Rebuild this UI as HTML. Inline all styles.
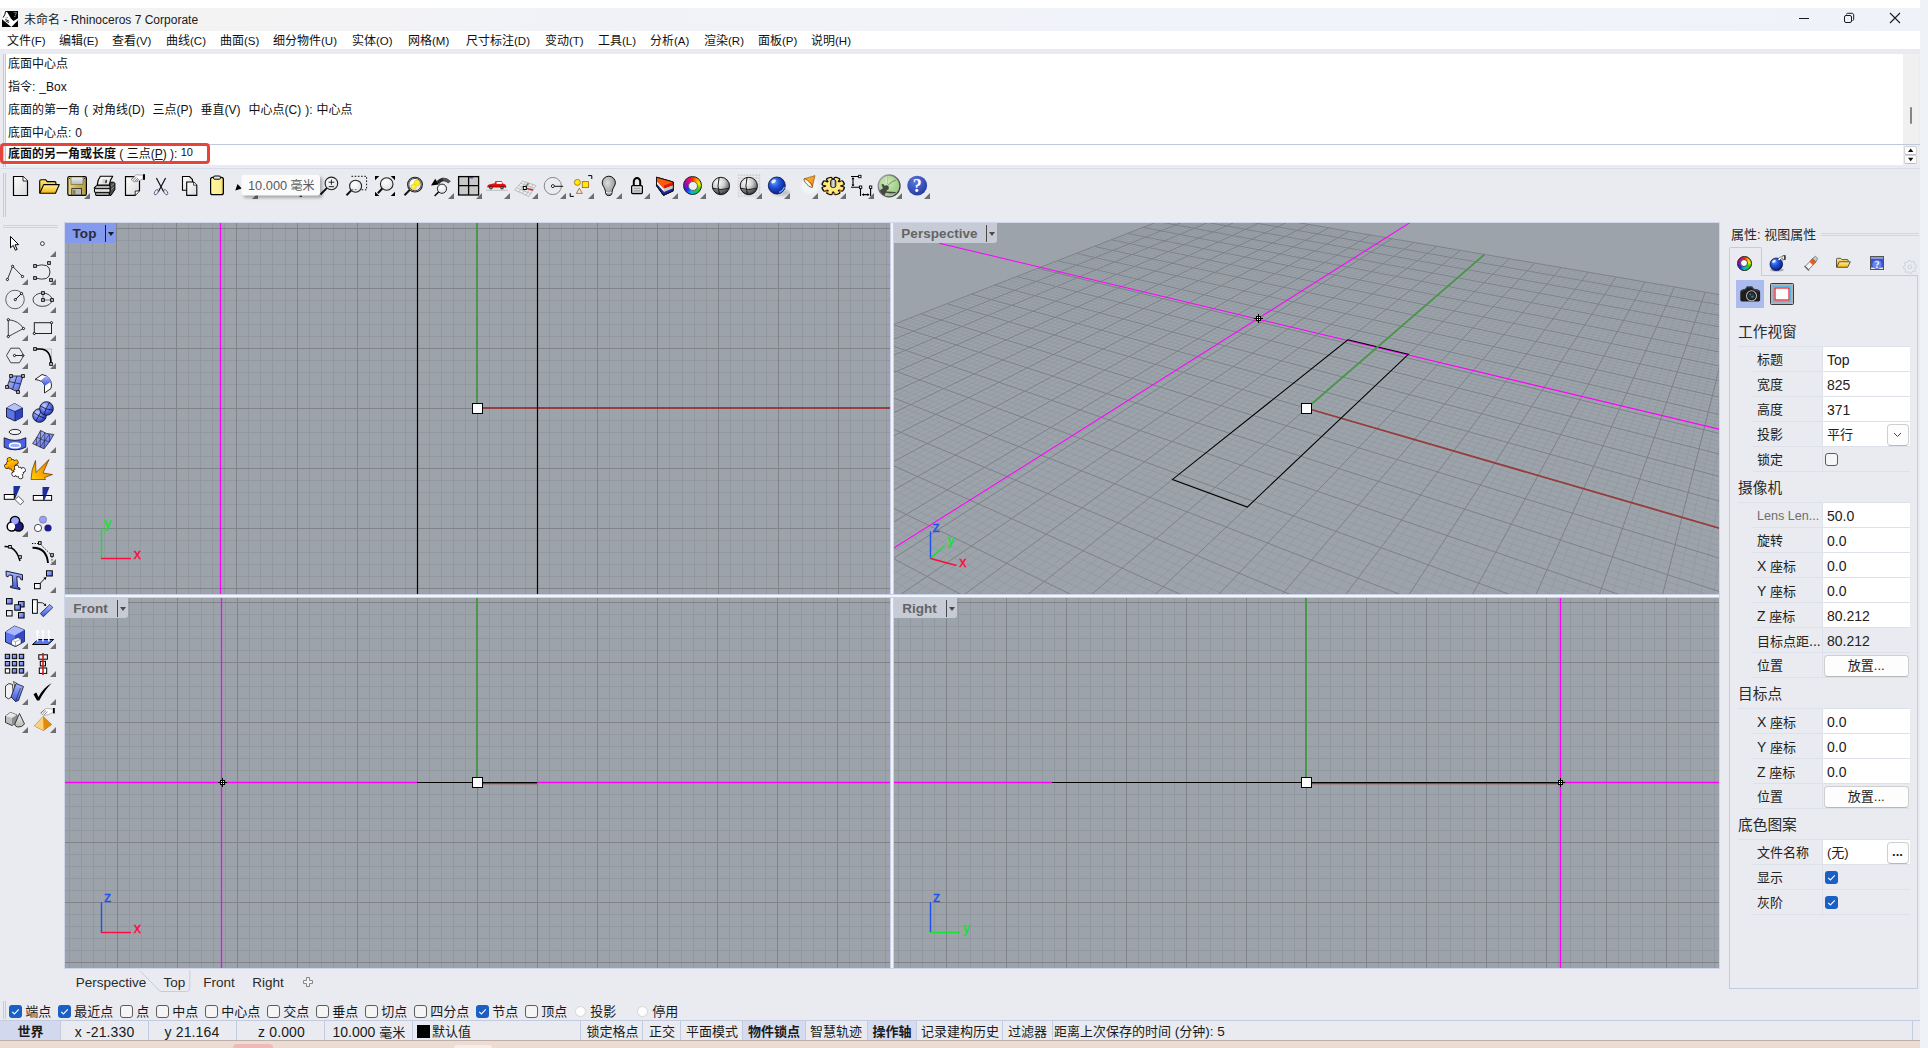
<!DOCTYPE html><html lang="zh"><head><meta charset="utf-8"><title>未命名 - Rhinoceros 7 Corporate</title><style>
*{box-sizing:border-box;margin:0;padding:0}
html,body{width:1928px;height:1048px;overflow:hidden;background:#fff}
body{position:relative;font-family:"Liberation Sans","Noto Sans CJK SC",sans-serif;font-size:12px;color:#111;line-height:1}
.a{position:absolute}
.t{position:absolute;white-space:nowrap;line-height:14px;height:14px}
svg{position:absolute;overflow:visible}
.vl{position:absolute;background:#c6cad6;height:20px;font-family:"Liberation Sans",sans-serif;font-weight:bold;font-size:13.5px;letter-spacing:.05px;color:#646464;line-height:21px;padding-right:12px;text-align:center;border-bottom-right-radius:3px}
</style></head><body>
<div class="a" style="left:0;top:8px;width:1920px;height:1032px;background:#e9ebf0"></div>
<div class="a" style="left:1920px;top:0;width:8px;height:1048px;background:#eff2f7"></div>
<div class="a" style="left:0;top:1040px;width:1920px;height:8px;background:#eedcd2"></div>
<div class="a" style="left:0;top:1040px;width:1920px;height:1px;background:#bcb0ac"></div>
<div class="a" style="left:233px;top:1044px;width:40px;height:4px;background:#efb9b8;border-radius:5px 5px 0 0"></div>
<div class="a" style="left:454px;top:1045px;width:38px;height:3px;background:#f8ece6;border-radius:4px 4px 0 0"></div>
<div class="a" style="left:0;top:8px;width:1920px;height:23px;background:linear-gradient(90deg,#f3f3f3 0,#f3f3f3 11%,#f1f2f8 30%,#f0f3f9 60%,#eff3f9 100%)"></div>
<div class="a" style="left:0;top:31px;width:1920px;height:18px;background:#fff"></div>
<svg style="left:2px;top:11px" width="16" height="16" viewBox="0 0 16 16"><rect x="0" y="0" width="16" height="16" fill="#fff"/><path d="M3.300 0H16V7.300L11.500 9.900L8.900 7.600L7.200 4.600L5.500 1.600Z" fill="#000"/><path d="M3.700 .2Q3 4 1.200 6.600" fill="none" stroke="#000" stroke-width="1"/><path d="M0 8.300L9.300 16H0Z" fill="#000"/><path d="M16 9.300V16H9.400Z" fill="#000"/><path d="M3.400 8.400L7.200 10.200M3.600 9.800L6.800 11.600" stroke="#000" stroke-width=".9"/><path d="M3.500 7.200L6 6.400" stroke="#555" stroke-width=".6"/><path d="M14.400 1.600L12.400 6.600" stroke="#fff" stroke-width=".7" stroke-dasharray="1.200 .600"/><path d="M11.600 1.400H14.400" stroke="#ddd" stroke-width=".5"/></svg>
<div class="t" style="left:24px;top:13px;color:#1a1a1a">未命名 - Rhinoceros 7 Corporate</div>
<svg style="left:1790px;top:8px" width="130" height="23" viewBox="1790 8 130 23" fill="none" stroke="#1a1a1a" stroke-width="1"><path d="M1799 18.5H1809"/><rect x="1844.5" y="15.5" width="7" height="7" rx="1.5"/><path d="M1846.5 14.500c0-.800.600-1.200 1.200-1.200h4.300c1 0 1.700.700 1.700 1.700v4.300c0 .700-.500 1.200-1.200 1.200"/><path d="M1890 13L1900 23M1900 13L1890 23" stroke-width="1.1"/></svg>
<div class="t" style="left:7px;top:34px;">文件<span style="font-size:11.5px">(F)</span></div>
<div class="t" style="left:59px;top:34px;">编辑<span style="font-size:11.5px">(E)</span></div>
<div class="t" style="left:112px;top:34px;">查看<span style="font-size:11.5px">(V)</span></div>
<div class="t" style="left:166px;top:34px;">曲线<span style="font-size:11.5px">(C)</span></div>
<div class="t" style="left:220px;top:34px;">曲面<span style="font-size:11.5px">(S)</span></div>
<div class="t" style="left:273px;top:34px;">细分物件<span style="font-size:11.5px">(U)</span></div>
<div class="t" style="left:352px;top:34px;">实体<span style="font-size:11.5px">(O)</span></div>
<div class="t" style="left:408px;top:34px;">网格<span style="font-size:11.5px">(M)</span></div>
<div class="t" style="left:466px;top:34px;">尺寸标注<span style="font-size:11.5px">(D)</span></div>
<div class="t" style="left:545px;top:34px;">变动<span style="font-size:11.5px">(T)</span></div>
<div class="t" style="left:598px;top:34px;">工具<span style="font-size:11.5px">(L)</span></div>
<div class="t" style="left:650px;top:34px;">分析<span style="font-size:11.5px">(A)</span></div>
<div class="t" style="left:704px;top:34px;">渲染<span style="font-size:11.5px">(R)</span></div>
<div class="t" style="left:758px;top:34px;">面板<span style="font-size:11.5px">(P)</span></div>
<div class="t" style="left:811px;top:34px;">说明<span style="font-size:11.5px">(H)</span></div>
<div class="a" style="left:6px;top:54px;width:1897px;height:90px;background:#fff"></div>
<div class="a" style="left:1903px;top:54px;width:16px;height:90px;background:#f0f0f0"></div>
<div class="a" style="left:1910px;top:107px;width:2px;height:17px;background:#858585;border-radius:1px"></div>
<div class="a" style="left:3px;top:54px;width:1px;height:113px;background:#c3cadf"></div>
<div class="a" style="left:5px;top:54px;width:1px;height:113px;background:#c3cadf"></div>
<div class="t" style="left:8px;top:57px;word-spacing:.65px">底面中心点</div>
<div class="t" style="left:8px;top:80px;word-spacing:.65px">指令: _Box</div>
<div class="t" style="left:8px;top:103px;word-spacing:.65px">底面的第一角 ( 对角线(D)&nbsp; 三点(P)&nbsp; 垂直(V)&nbsp; 中心点(C) ): 中心点</div>
<div class="t" style="left:8px;top:126px;word-spacing:.65px">底面中心点: 0</div>
<div class="a" style="left:0;top:144px;width:1920px;height:1px;background:#bfc8dc"></div>
<div class="a" style="left:6px;top:145px;width:1897px;height:20px;background:#fff"></div>
<div class="a" style="left:1px;top:168px;width:1919px;height:1px;background:#d6dbe8"></div>
<div class="t" style="left:8px;top:147px;"><b>底面的另一角或长度</b> ( 三点(<u>P</u>) ): <span style="font-size:11px;position:relative;top:-2px">10</span></div>
<div class="a" style="left:0;top:143px;width:210px;height:21px;border:3px solid #e8433a;border-radius:4px"></div>
<div class="a" style="left:1903px;top:145px;width:16px;height:20px;background:#eeeef0"></div>
<div class="a" style="left:1904.300px;top:146.200px;width:13px;height:8.400px;background:#fdfdfd;border:1px solid #d4d4d4;border-bottom-color:#bdbdbd;border-radius:2px"></div>
<div class="a" style="left:1904.300px;top:155.300px;width:13px;height:8.400px;background:#fdfdfd;border:1px solid #d4d4d4;border-bottom-color:#bdbdbd;border-radius:2px"></div>
<svg style="left:1904px;top:146px" width="14" height="18" viewBox="1904 146 14 18"><path d="M1908 152L1910.700 148.600L1913.400 152Z M1908 157.800L1910.700 161.200L1913.400 157.800Z" fill="#111"/></svg>
<div class="a" style="left:64px;top:222px;width:1656px;height:747px;background:#cfd6ea"></div>
<div class="a" style="left:890px;top:223px;width:4px;height:745px;background:#f2f4f9;border-left:1px solid #c9d1e8;border-right:1px solid #c9d1e8"></div>
<div class="a" style="left:65px;top:594px;width:1654px;height:4px;background:#f2f4f9;border-top:1px solid #c9d1e8;border-bottom:1px solid #c9d1e8"></div>
<div class="a" style="left:891px;top:595px;width:2px;height:2px;background:#f2f4f9"></div>
<svg style="left:65px;top:223px" width="825" height="371" viewBox="65 223 825 371"><defs><clipPath id="ct"><rect x="65" y="223" width="825" height="371"/></clipPath></defs><g clip-path="url(#ct)"><rect x="65" y="223" width="825" height="371" fill="#9da3aa"/><path d="M68.5 223V594M80.5 223V594M92.5 223V594M104.5 223V594M128.5 223V594M140.5 223V594M152.5 223V594M164.5 223V594M188.5 223V594M200.5 223V594M212.5 223V594M224.5 223V594M248.5 223V594M260.5 223V594M272.5 223V594M285.5 223V594M309.5 223V594M65 240.5H890M321.5 223V594M65 252.5H890M333.5 223V594M65 264.5H890M345.5 223V594M65 276.5H890M369.5 223V594M65 300.5H890M381.5 223V594M65 312.5H890M393.5 223V594M65 324.5H890M405.5 223V594M65 336.5H890M429.5 223V594M65 360.5H890M441.5 223V594M65 372.5H890M453.5 223V594M65 384.5H890M465.5 223V594M65 396.5H890M489.5 223V594M65 420.5H890M501.5 223V594M65 432.5H890M513.5 223V594M65 444.5H890M525.5 223V594M65 456.5H890M549.5 223V594M65 480.5H890M561.5 223V594M65 492.5H890M573.5 223V594M65 504.5H890M585.5 223V594M65 516.5H890M609.5 223V594M65 540.5H890M621.5 223V594M65 552.5H890M633.5 223V594M65 564.5H890M645.5 223V594M65 576.5H890M669.5 223V594M682.5 223V594M694.5 223V594M706.5 223V594M730.5 223V594M742.5 223V594M754.5 223V594M766.5 223V594M790.5 223V594M802.5 223V594M814.5 223V594M826.5 223V594M850.5 223V594M862.5 223V594M874.5 223V594M886.5 223V594" stroke="#9198a0" stroke-width="1" fill="none"/><path d="M116.5 223V594M176.5 223V594M236.5 223V594M297.5 223V594M65 228.5H890M357.5 223V594M65 288.5H890M417.5 223V594M65 348.5H890M477.5 223V594M65 408.5H890M537.5 223V594M65 468.5H890M597.5 223V594M65 528.5H890M657.5 223V594M65 588.5H890M718.5 223V594M778.5 223V594M838.5 223V594" stroke="#7f848b" stroke-width="1" fill="none"/><path d="M220.5 223V594" stroke="#ff00ff" stroke-width="1.3"/><path d="M477 223V408" stroke="#4b964b" stroke-width="2"/><path d="M477 408H890" stroke="#963c3c" stroke-width="2"/><path d="M417.500 223V594M537.500 223V594" stroke="#000" stroke-width="1.200"/><rect x="472.5" y="403.5" width="10" height="10" fill="#fff" stroke="#000" stroke-width="1"/><path d="M101.5 559.0V528.2" stroke="#14e132" stroke-width="1.400" fill="none"/><path d="M100.9 558.5H131.0" stroke="#ff0a3c" stroke-width="1.400" fill="none"/><text x="133.7" y="559.1" font-family="Liberation Sans,sans-serif" font-size="14.500" fill="#ff0a3c" stroke="#ff0a3c" stroke-width=".35">x</text><text x="104.1" y="528.0" font-family="Liberation Sans,sans-serif" font-size="14.500" fill="#14e132" stroke="#14e132" stroke-width=".35">y</text></g></svg>
<svg style="left:65px;top:598px" width="825" height="370" viewBox="65 598 825 370"><defs><clipPath id="cf"><rect x="65" y="598" width="825" height="370"/></clipPath></defs><g clip-path="url(#cf)"><rect x="65" y="598" width="825" height="370" fill="#9da3aa"/><path d="M69.5 598V968M81.5 598V968M93.5 598V968M105.5 598V968M129.5 598V968M141.5 598V968M153.5 598V968M165.5 598V968M189.5 598V968M201.5 598V968M213.5 598V968M225.5 598V968M249.5 598V968M261.5 598V968M273.5 598V968M285.5 598V968M309.5 598V968M65 614.5H890M321.5 598V968M65 626.5H890M333.5 598V968M65 638.5H890M345.5 598V968M65 650.5H890M369.5 598V968M65 674.5H890M381.5 598V968M65 686.5H890M393.5 598V968M65 698.5H890M405.5 598V968M65 710.5H890M429.5 598V968M65 734.5H890M441.5 598V968M65 746.5H890M453.5 598V968M65 758.5H890M465.5 598V968M65 770.5H890M489.5 598V968M65 794.5H890M501.5 598V968M65 806.5H890M513.5 598V968M65 818.5H890M525.5 598V968M65 830.5H890M549.5 598V968M65 854.5H890M561.5 598V968M65 866.5H890M573.5 598V968M65 878.5H890M585.5 598V968M65 890.5H890M609.5 598V968M65 914.5H890M621.5 598V968M65 926.5H890M633.5 598V968M65 938.5H890M645.5 598V968M65 950.5H890M669.5 598V968M681.5 598V968M693.5 598V968M705.5 598V968M729.5 598V968M741.5 598V968M753.5 598V968M765.5 598V968M789.5 598V968M801.5 598V968M813.5 598V968M825.5 598V968M849.5 598V968M861.5 598V968M873.5 598V968M885.5 598V968" stroke="#9198a0" stroke-width="1" fill="none"/><path d="M117.5 598V968M177.5 598V968M237.5 598V968M297.5 598V968M65 602.5H890M357.5 598V968M65 662.5H890M417.5 598V968M65 722.5H890M477.5 598V968M65 782.5H890M537.5 598V968M65 842.5H890M597.5 598V968M65 902.5H890M657.5 598V968M65 962.5H890M717.5 598V968M777.5 598V968M837.5 598V968" stroke="#7f848b" stroke-width="1" fill="none"/><path d="M477 783.500H537" stroke="#963c3c" stroke-width="1.400"/><path d="M221.500 598V968M65 782.500H417M537 782.500H890" stroke="#ff00ff" stroke-width="1.300"/><path d="M417 782.500H537" stroke="#000" stroke-width="1.100"/><path d="M477 598V782" stroke="#4b964b" stroke-width="2"/><g shape-rendering="crispEdges"><rect x="220" y="780" width="5" height="5" fill="#000"/><rect x="218" y="782" width="9" height="1" fill="#000"/><rect x="222" y="778" width="1" height="9" fill="#000"/><rect x="221" y="781" width="1" height="1" fill="#fff"/><rect x="221" y="783" width="1" height="1" fill="#fff"/><rect x="223" y="781" width="1" height="1" fill="#fff"/><rect x="223" y="783" width="1" height="1" fill="#fff"/></g><rect x="472.5" y="777.5" width="10" height="10" fill="#fff" stroke="#000" stroke-width="1"/><path d="M101.5 933.0V902.2" stroke="#1e50f0" stroke-width="1.400" fill="none"/><path d="M100.9 932.5H131.0" stroke="#ff0a3c" stroke-width="1.400" fill="none"/><text x="133.7" y="933.1" font-family="Liberation Sans,sans-serif" font-size="14.500" fill="#ff0a3c" stroke="#ff0a3c" stroke-width=".35">x</text><text x="104.1" y="902.0" font-family="Liberation Sans,sans-serif" font-size="14.500" fill="#1e50f0" stroke="#1e50f0" stroke-width=".35">z</text></g></svg>
<svg style="left:894px;top:598px" width="825" height="370" viewBox="894 598 825 370"><defs><clipPath id="cr"><rect x="894" y="598" width="825" height="370"/></clipPath></defs><g clip-path="url(#cr)"><rect x="894" y="598" width="825" height="370" fill="#9da3aa"/><path d="M898.5 598V968M910.5 598V968M922.5 598V968M934.5 598V968M958.5 598V968M970.5 598V968M982.5 598V968M994.5 598V968M1018.5 598V968M1030.5 598V968M1042.5 598V968M1054.5 598V968M1078.5 598V968M1090.5 598V968M1102.5 598V968M1114.5 598V968M1138.5 598V968M894 614.5H1719M1150.5 598V968M894 626.5H1719M1162.5 598V968M894 638.5H1719M1174.5 598V968M894 650.5H1719M1198.5 598V968M894 674.5H1719M1210.5 598V968M894 686.5H1719M1222.5 598V968M894 698.5H1719M1234.5 598V968M894 710.5H1719M1258.5 598V968M894 734.5H1719M1270.5 598V968M894 746.5H1719M1282.5 598V968M894 758.5H1719M1294.5 598V968M894 770.5H1719M1318.5 598V968M894 794.5H1719M1330.5 598V968M894 806.5H1719M1342.5 598V968M894 818.5H1719M1354.5 598V968M894 830.5H1719M1378.5 598V968M894 854.5H1719M1390.5 598V968M894 866.5H1719M1402.5 598V968M894 878.5H1719M1414.5 598V968M894 890.5H1719M1438.5 598V968M894 914.5H1719M1450.5 598V968M894 926.5H1719M1462.5 598V968M894 938.5H1719M1474.5 598V968M894 950.5H1719M1498.5 598V968M1510.5 598V968M1522.5 598V968M1534.5 598V968M1558.5 598V968M1570.5 598V968M1582.5 598V968M1594.5 598V968M1618.5 598V968M1630.5 598V968M1642.5 598V968M1654.5 598V968M1678.5 598V968M1690.5 598V968M1702.5 598V968M1714.5 598V968" stroke="#9198a0" stroke-width="1" fill="none"/><path d="M946.5 598V968M1006.5 598V968M1066.5 598V968M1126.5 598V968M894 602.5H1719M1186.5 598V968M894 662.5H1719M1246.5 598V968M894 722.5H1719M1306.5 598V968M894 782.5H1719M1366.5 598V968M894 842.5H1719M1426.5 598V968M894 902.5H1719M1486.5 598V968M894 962.5H1719M1546.5 598V968M1606.5 598V968M1666.5 598V968" stroke="#7f848b" stroke-width="1" fill="none"/><path d="M1306 783.500H1560" stroke="#963c3c" stroke-width="1.400"/><path d="M1560.500 598V968M894 782.500H1052M1560 782.500H1719" stroke="#ff00ff" stroke-width="1.300"/><path d="M1052 782.500H1560" stroke="#000" stroke-width="1.100"/><path d="M1306 598V782" stroke="#4b964b" stroke-width="2"/><g shape-rendering="crispEdges"><rect x="1558" y="780" width="5" height="5" fill="#000"/><rect x="1556" y="782" width="9" height="1" fill="#000"/><rect x="1560" y="778" width="1" height="9" fill="#000"/><rect x="1559" y="781" width="1" height="1" fill="#fff"/><rect x="1559" y="783" width="1" height="1" fill="#fff"/><rect x="1561" y="781" width="1" height="1" fill="#fff"/><rect x="1561" y="783" width="1" height="1" fill="#fff"/></g><rect x="1301.5" y="777.5" width="10" height="10" fill="#fff" stroke="#000" stroke-width="1"/><path d="M930.5 933.0V902.2" stroke="#1e50f0" stroke-width="1.400" fill="none"/><path d="M929.9 932.5H960.0" stroke="#14e132" stroke-width="1.400" fill="none"/><text x="962.7" y="933.1" font-family="Liberation Sans,sans-serif" font-size="14.500" fill="#14e132" stroke="#14e132" stroke-width=".35">y</text><text x="933.1" y="902.0" font-family="Liberation Sans,sans-serif" font-size="14.500" fill="#1e50f0" stroke="#1e50f0" stroke-width=".35">z</text></g></svg>
<svg style="left:894px;top:223px" width="825" height="371" viewBox="894 223 825 371"><defs><clipPath id="cp"><rect x="894" y="223" width="825" height="371"/></clipPath></defs><g clip-path="url(#cp)"><rect x="894" y="223" width="825" height="371" fill="#9da3aa"/><path d="M354.3 538.86L1202.38 206.23M365.19 530.09L2467.1 2528.88M357.64 542.14L1205.81 206.81M379.1 524.68L2440.11 2421.86M361.02 545.46L1209.25 207.4M392.75 519.36L2415.28 2323.41M364.43 548.82L1212.71 207.99M406.15 514.15L2392.37 2232.55M371.38 555.65L1219.67 209.19M432.2 504.02L2351.46 2070.31M374.92 559.13L1223.18 209.79M444.87 499.09L2333.12 1997.59M378.5 562.65L1226.71 210.39M457.3 494.25L2316 1929.73M382.11 566.21L1230.25 210.99M469.52 489.49L2299.99 1866.25M389.48 573.45L1237.38 212.22M493.31 480.24L2270.89 1750.84M393.23 577.14L1240.98 212.83M504.89 475.73L2257.62 1698.23M397.03 580.87L1244.59 213.45M516.27 471.3L2245.11 1648.63M400.87 584.65L1248.22 214.07M527.46 466.95L2233.3 1601.79M408.7 592.35L1255.53 215.32M549.26 458.46L2211.54 1515.51M412.69 596.27L1259.21 215.95M559.89 454.33L2201.5 1475.69M416.72 600.24L1262.92 216.58M570.34 450.26L2191.96 1437.87M420.81 604.26L1266.64 217.22M580.63 446.26L2182.89 1401.89M429.14 612.45L1274.13 218.5M600.69 438.45L2166.01 1334.95M433.38 616.63L1277.91 219.15M610.48 434.64L2158.15 1303.77M437.68 620.85L1281.7 219.8M620.11 430.89L2150.63 1273.97M442.04 625.14L1285.52 220.45M629.59 427.2L2143.44 1245.47M450.92 633.87L1293.2 221.76M648.12 420L2129.97 1192.04M455.45 638.33L1297.08 222.43M657.16 416.48L2123.64 1166.95M460.04 642.84L1300.97 223.09M666.07 413.01L2117.57 1142.88M464.69 647.42L1304.88 223.76M674.84 409.6L2111.74 1119.74M474.18 656.75L1312.76 225.11M691.99 402.92L2100.73 1076.1M479.03 661.51L1316.74 225.79M700.38 399.66L2095.53 1055.49M483.94 666.34L1320.73 226.47M708.64 396.45L2090.53 1035.63M488.91 671.24L1324.74 227.16M716.78 393.28L2085.7 1016.48M499.08 681.24L1332.83 228.54M732.7 387.08L2076.54 980.17M504.27 686.34L1336.91 229.24M740.49 384.05L2072.19 962.93M509.54 691.52L1341.01 229.94M748.18 381.06L2067.99 946.27M514.88 696.77L1345.12 230.65M755.75 378.12L2063.93 930.16M525.8 707.51L1353.43 232.07M770.58 372.34L2056.19 899.47M531.37 713L1357.61 232.78M777.84 369.52L2052.5 884.84M537.04 718.56L1361.82 233.5M785 366.73L2048.92 870.67M542.78 724.21L1366.05 234.22M792.06 363.98L2045.46 856.92M554.53 735.77L1374.57 235.68M805.9 358.6L2038.83 830.64M560.54 741.68L1378.87 236.42M812.68 355.96L2035.66 818.07M566.64 747.68L1383.19 237.16M819.37 353.36L2032.58 805.87M572.84 753.78L1387.53 237.9M825.98 350.79L2029.59 794M585.53 766.25L1396.29 239.4M838.93 345.75L2023.85 771.25M592.02 772.64L1400.7 240.15M845.28 343.28L2021.1 760.33M598.62 779.13L1405.14 240.91M851.54 340.84L2018.42 749.71M605.32 785.72L1409.6 241.67M857.73 338.43L2015.81 739.37M619.06 799.23L1418.6 243.21M869.87 333.71L2010.8 719.47M626.1 806.15L1423.13 243.99M875.82 331.39L2008.38 709.91M633.26 813.19L1427.69 244.77M881.71 329.1L2006.03 700.58M640.53 820.35L1432.28 245.55M887.52 326.84L2003.74 691.48M655.46 835.02L1441.52 247.14M898.92 322.4L1999.31 673.94M663.11 842.55L1446.19 247.93M904.52 320.23L1997.18 665.48M670.9 850.21L1450.88 248.74M910.05 318.07L1995.1 657.22M678.82 858.01L1455.59 249.54M915.51 315.95L1993.06 649.16M695.1 874.01L1465.1 251.17M926.25 311.77L1989.14 633.58M703.45 882.23L1469.89 251.99M931.52 309.72L1987.24 626.05M711.96 890.59L1474.72 252.81M936.73 307.69L1985.38 618.69M720.62 899.11L1479.56 253.64M941.88 305.69L1983.57 611.49M738.44 916.63L1489.35 255.32M952 301.75L1980.05 597.56M747.59 925.64L1494.28 256.16M956.97 299.81L1978.35 590.82M756.93 934.82L1499.24 257.01M961.89 297.9L1976.69 584.22M766.44 944.17L1504.23 257.86M966.75 296.01L1975.06 577.75M786.02 963.43L1514.3 259.58M976.31 292.29L1971.9 565.22M796.1 973.34L1519.37 260.45M981.01 290.46L1970.36 559.15M806.38 983.45L1524.48 261.33M985.66 288.65L1968.86 553.19M816.87 993.77L1529.61 262.2M990.26 286.86L1967.39 547.35M838.5 1015.04L1539.98 263.98M999.3 283.34L1964.53 536.02M849.65 1026.01L1545.2 264.87M1003.75 281.61L1963.14 530.52M861.04 1037.2L1550.46 265.77M1008.15 279.9L1961.78 525.12M872.66 1048.64L1555.75 266.68M1012.5 278.21L1960.45 519.82M896.68 1072.25L1566.43 268.5M1021.07 274.87L1957.85 509.53M909.08 1084.45L1571.81 269.42M1025.28 273.23L1956.59 504.52M921.75 1096.91L1577.23 270.35M1029.45 271.61L1955.35 499.6M934.71 1109.66L1582.68 271.28M1033.58 270L1954.13 494.77M961.53 1136.03L1593.67 273.16M1041.71 266.84L1951.76 485.38M975.4 1149.67L1599.22 274.11M1045.71 265.28L1950.61 480.8M989.6 1163.64L1604.81 275.07M1049.67 263.74L1949.47 476.3M1004.13 1177.93L1610.42 276.03M1053.59 262.22L1948.36 471.89M1034.27 1207.57L1621.76 277.97M1061.31 259.21L1946.19 463.27M1049.89 1222.94L1627.48 278.95M1065.11 257.73L1945.13 459.08M1065.91 1238.68L1633.24 279.93M1068.88 256.27L1944.09 454.95M1082.33 1254.83L1639.03 280.92M1072.61 254.82L1943.06 450.89M1116.44 1288.38L1650.72 282.92M1079.95 251.96L1941.07 442.97M1134.17 1305.82L1656.63 283.93M1083.57 250.55L1940.09 439.1M1152.37 1323.72L1662.56 284.95M1087.15 249.16L1939.13 435.3M1171.06 1342.1L1668.54 285.97M1090.7 247.78L1938.19 431.56M1210 1380.39L1680.61 288.03M1097.7 245.05L1936.35 424.25M1230.29 1400.35L1686.7 289.08M1101.15 243.71L1935.45 420.68M1251.16 1420.87L1692.83 290.12M1104.56 242.38L1934.56 417.16M1272.63 1441.99L1699 291.18M1107.94 241.07L1933.69 413.7M1317.5 1486.11L1711.45 293.31M1114.61 238.47L1931.98 406.94M1340.94 1509.17L1717.74 294.39M1117.9 237.19L1931.15 403.63M1365.11 1532.94L1724.07 295.47M1121.16 235.92L1930.32 400.37M1390.04 1557.45L1730.44 296.56M1124.39 234.67L1929.51 397.16M1442.28 1608.83L1743.31 298.76M1130.76 232.19L1927.93 390.88M1469.69 1635.79L1749.8 299.87M1133.9 230.97L1927.16 387.81M1498.01 1663.63L1756.34 300.99M1137.01 229.76L1926.39 384.78M1527.28 1692.43L1762.93 302.11M1140.09 228.56L1925.64 381.79M1588.91 1753.03L1776.22 304.39M1146.18 226.19L1924.16 375.95M1621.36 1784.95L1782.94 305.54M1149.18 225.02L1923.44 373.09M1655 1818.03L1789.7 306.69M1152.15 223.86L1922.73 370.26M1689.88 1852.33L1796.5 307.86M1155.1 222.72L1922.03 367.48M1763.64 1924.87L1810.25 310.21M1160.92 220.45L1920.65 362.02M1802.69 1963.27L1817.2 311.4M1163.79 219.33L1919.98 359.35M1843.29 2003.2L1824.19 312.59M1166.64 218.23L1919.31 356.71M1885.55 2044.76L1831.23 313.8M1169.46 217.13L1918.66 354.11M1975.43 2133.16L1845.46 316.23M1175.04 214.96L1917.37 349.01M2023.3 2180.23L1852.64 317.46M1177.79 213.89L1916.74 346.51M2073.28 2229.39L1859.88 318.7M1180.51 212.83L1916.12 344.04M2125.53 2280.78L1867.17 319.95M1183.22 211.78L1915.5 341.6M2237.47 2390.86L1881.89 322.47M1188.56 209.7L1914.3 336.82M2297.52 2449.91L1889.33 323.74M1191.2 208.67L1913.71 334.48M2360.56 2511.91L1896.83 325.02M1193.81 207.65L1913.12 332.16M2426.81 2577.07L1904.37 326.31M1196.4 206.65L1912.54 329.87" stroke="#9198a0" stroke-width="0.9" fill="none" opacity="0.85"/><path d="M351 535.61L1198.97 205.65M351 535.61L2496.55 2645.65M367.89 552.21L1216.18 208.59M419.29 509.04L2371.15 2148.42M385.78 569.81L1233.81 211.6M481.52 484.82L2284.99 1806.74M404.76 588.48L1251.87 214.69M538.45 462.67L2222.13 1557.48M424.95 608.33L1270.37 217.86M590.74 442.32L2174.25 1367.62M446.45 629.48L1289.35 221.1M638.93 423.57L2136.56 1218.18M469.4 652.05L1308.81 224.43M683.48 406.24L2106.13 1097.5M493.96 676.2L1328.78 227.85M724.8 390.16L2081.04 998.01M520.3 702.1L1349.26 231.35M763.21 375.21L2060 914.57M548.61 729.95L1370.3 234.95M799.03 361.27L2042.09 843.58M579.13 759.97L1391.9 238.65M832.49 348.25L2026.68 782.47M612.14 792.42L1414.09 242.44M863.84 336.05L2013.27 729.29M647.93 827.62L1436.89 246.34M893.25 324.61L2001.5 682.6M686.89 865.94L1460.33 250.35M920.91 313.85L1991.08 641.28M729.45 907.79L1484.44 254.48M946.97 303.71L1981.79 604.45M776.13 953.71L1509.25 258.72M971.56 294.14L1973.46 571.42M827.58 1004.3L1534.78 263.09M994.8 285.09L1965.95 541.63M884.54 1060.32L1561.07 267.59M1016.8 276.53L1959.14 514.63M947.97 1122.69L1588.16 272.22M1037.67 268.41L1952.94 490.03M1019.02 1192.57L1616.08 276.99M1057.47 260.71L1947.26 467.54M1099.17 1271.39L1644.86 281.92M1076.3 253.38L1942.06 446.9M1190.27 1360.99L1674.55 287M1094.22 246.41L1937.26 427.87M1294.74 1463.73L1705.2 292.24M1111.3 239.76L1932.83 410.3M1415.75 1582.73L1736.85 297.65M1127.59 233.42L1928.72 394M1557.57 1722.21L1769.55 303.25M1143.15 227.37L1924.9 378.85M1726.07 1887.92L1803.36 309.03M1158.02 221.58L1921.34 364.73M1929.56 2088.04L1838.32 315.01M1172.26 216.04L1918.01 351.55M2180.2 2334.54L1874.5 321.2M1185.9 210.73L1914.9 339.2M2496.55 2645.65L1911.97 327.61M1198.97 205.65L1911.97 327.61" stroke="#7b8087" stroke-width=".95" fill="none"/><path d="M1306.72 408.26L1981.79 604.45" stroke="#963c3c" stroke-width="1.800" fill="none"/><path d="M691.87 675.4L1454.32 194.64" stroke="#ff00ff" stroke-width="1.050"/><path d="M939.2 243.2L1929.55 479.34" stroke="#ff00ff" stroke-width="1.050"/><path d="M1347.88 339.85L1408.37 354.35L1247.28 507.07L1172.47 479.46Z" stroke="#000" stroke-width="1.050" fill="none"/><path d="M1306.72 408.26L1484.44 254.48" stroke="#4b964b" stroke-width="1.800" fill="none"/><g shape-rendering="crispEdges"><rect x="1256" y="316" width="5" height="5" fill="#000"/><rect x="1254" y="318" width="9" height="1" fill="#000"/><rect x="1258" y="314" width="1" height="9" fill="#000"/><rect x="1257" y="317" width="1" height="1" fill="#fff"/><rect x="1257" y="319" width="1" height="1" fill="#fff"/><rect x="1259" y="317" width="1" height="1" fill="#fff"/><rect x="1259" y="319" width="1" height="1" fill="#fff"/></g><rect x="1301.5" y="403.5" width="10" height="10" fill="#fff" stroke="#000" stroke-width="1"/><path d="M930.500 559V531.300" stroke="#1e50f0" stroke-width="1.400"/><path d="M930.500 558.500L944.700 545.600" stroke="#14e132" stroke-width="1.400"/><path d="M930.500 558.500L956.500 565.500" stroke="#ff0a3c" stroke-width="1.400"/><text x="932.600" y="531.800" font-family="Liberation Sans,sans-serif" font-size="14.500" stroke-width=".35" fill="#1e50f0" stroke="#1e50f0">z</text><text x="947.200" y="544.900" font-family="Liberation Sans,sans-serif" font-size="14.500" stroke-width=".35" fill="#14e132" stroke="#14e132">y</text><text x="959.200" y="566.500" font-family="Liberation Sans,sans-serif" font-size="14.500" stroke-width=".35" fill="#ff0a3c" stroke="#ff0a3c">x</text></g></svg>
<div class="vl" style="left:65px;top:223px;width:51px;background:#849aec;color:#2b2b3a">Top<div class="a" style="right:10px;top:2px;width:1px;height:17px;background:#1b1b25"></div><div class="a" style="right:2px;top:8.500px;width:0;height:0;border-left:3.500px solid transparent;border-right:3.500px solid transparent;border-top:4px solid #1b1b25"></div></div>
<div class="vl" style="left:894px;top:223px;width:103px;background:#c6cbd5;color:#646464">Perspective<div class="a" style="right:10px;top:2px;width:1px;height:17px;background:#4a4a4a"></div><div class="a" style="right:2px;top:8.500px;width:0;height:0;border-left:3.500px solid transparent;border-right:3.500px solid transparent;border-top:4px solid #4a4a4a"></div></div>
<div class="vl" style="left:65px;top:598px;width:63px;background:#c6cbd5;color:#646464">Front<div class="a" style="right:10px;top:2px;width:1px;height:17px;background:#4a4a4a"></div><div class="a" style="right:2px;top:8.500px;width:0;height:0;border-left:3.500px solid transparent;border-right:3.500px solid transparent;border-top:4px solid #4a4a4a"></div></div>
<div class="vl" style="left:894px;top:598px;width:63px;background:#c6cbd5;color:#646464">Right<div class="a" style="right:10px;top:2px;width:1px;height:17px;background:#4a4a4a"></div><div class="a" style="right:2px;top:8.500px;width:0;height:0;border-left:3.500px solid transparent;border-right:3.500px solid transparent;border-top:4px solid #4a4a4a"></div></div>
<svg style="left:0;top:168px" width="940" height="44" viewBox="0 168 940 44"><defs>
<linearGradient id="gpaper" x1="0" y1="0" x2="1" y2="1"><stop offset="0" stop-color="#fff"/><stop offset="1" stop-color="#d9d9d9"/></linearGradient>
<linearGradient id="gfold" x1="0" y1="0" x2="0" y2="1"><stop offset="0" stop-color="#fff3a8"/><stop offset="1" stop-color="#f4b400"/></linearGradient>
<linearGradient id="gfold2" x1="0" y1="0" x2="0" y2="1"><stop offset="0" stop-color="#ffe77a"/><stop offset="1" stop-color="#e8a800"/></linearGradient>
<linearGradient id="gsave" x1="0" y1="0" x2="1" y2="0"><stop offset="0" stop-color="#e8d88c"/><stop offset=".5" stop-color="#c9b45a"/><stop offset="1" stop-color="#b39c48"/></linearGradient>
<linearGradient id="ggrey" x1="0" y1="0" x2="0" y2="1"><stop offset="0" stop-color="#f2f2f2"/><stop offset="1" stop-color="#b8b8b8"/></linearGradient>
<linearGradient id="gclip" x1="0" y1="0" x2="1" y2="0"><stop offset="0" stop-color="#fff6a5"/><stop offset=".8" stop-color="#fdee8e"/><stop offset="1" stop-color="#c8b04a"/></linearGradient>
<radialGradient id="gsph" cx=".35" cy=".3" r=".8"><stop offset="0" stop-color="#fff"/><stop offset=".45" stop-color="#cfcfcf"/><stop offset="1" stop-color="#3c3c3c"/></radialGradient>
<radialGradient id="gblue" cx=".35" cy=".3" r=".8"><stop offset="0" stop-color="#6aa0ff"/><stop offset=".4" stop-color="#1f55d8"/><stop offset="1" stop-color="#04107a"/></radialGradient>
<radialGradient id="gbulb" cx=".4" cy=".35" r=".7"><stop offset="0" stop-color="#dcdcdc"/><stop offset="1" stop-color="#8c8c8c"/></radialGradient>
<radialGradient id="glens" cx=".4" cy=".35" r=".7"><stop offset="0" stop-color="#fff"/><stop offset="1" stop-color="#dedede"/></radialGradient>
<linearGradient id="gcar" x1="0" y1="0" x2="0" y2="1"><stop offset="0" stop-color="#ff2a2a"/><stop offset="1" stop-color="#c80000"/></linearGradient>
<linearGradient id="gcone" x1="0" y1="0" x2="1" y2="1"><stop offset="0" stop-color="#ffc04a"/><stop offset="1" stop-color="#f27c00"/></linearGradient>
<radialGradient id="ghelp" cx=".4" cy=".3" r=".8"><stop offset="0" stop-color="#5a78e0"/><stop offset="1" stop-color="#1f349a"/></radialGradient>
<radialGradient id="ggh" cx=".4" cy=".35" r=".8"><stop offset="0" stop-color="#cdeab0"/><stop offset="1" stop-color="#8cc07a"/></radialGradient>
<linearGradient id="gbl" x1="0" y1="0" x2="1" y2="1"><stop offset="0" stop-color="#b9c4ff"/><stop offset="1" stop-color="#4a63e6"/></linearGradient>
<linearGradient id="gbl2" x1="0" y1="0" x2="0" y2="1"><stop offset="0" stop-color="#aab8ff"/><stop offset="1" stop-color="#3b55dd"/></linearGradient>
<radialGradient id="gbls" cx=".35" cy=".3" r=".8"><stop offset="0" stop-color="#c4ceff"/><stop offset=".5" stop-color="#5b72ea"/><stop offset="1" stop-color="#1c2fa8"/></radialGradient>
<linearGradient id="gor" x1="0" y1="0" x2="0" y2="1"><stop offset="0" stop-color="#ffd200"/><stop offset="1" stop-color="#ff8a00"/></linearGradient>
<linearGradient id="gor2" x1="0" y1="1" x2="1" y2="0"><stop offset="0" stop-color="#ffd200"/><stop offset="1" stop-color="#f06a00"/></linearGradient>
<filter id="blur" x="-20%" y="-40%" width="140%" height="180%"><feGaussianBlur stdDeviation="1.6"/></filter><filter id="blur1" x="-30%" y="-30%" width="160%" height="160%"><feGaussianBlur stdDeviation="1.2"/></filter><pattern id="dots" x="737.500" y="174" width="2.950" height="2.950" patternUnits="userSpaceOnUse"><rect x=".4" y=".4" width="1.700" height="1.700" fill="#c8cacf"/></pattern><linearGradient id="gghs" x1="0" y1="0" x2="1" y2="1"><stop offset="0" stop-color="#b4b4b4"/><stop offset=".5" stop-color="#666"/><stop offset="1" stop-color="#2a2a2a"/></linearGradient><linearGradient id="gcyl" x1="0" y1="0" x2="1" y2="0"><stop offset="0" stop-color="#7a7a7a"/><stop offset=".5" stop-color="#e6e6e6"/><stop offset="1" stop-color="#6a6a6a"/></linearGradient></defs><path d="M3.500 173V217M5.500 173V217" stroke="#c3cadf" stroke-width="1"/><path d="M13.5 176.5H23L27.5 181V195.5H13.5Z" fill="url(#gpaper)" stroke="#000" stroke-width="1.2"/><path d="M23 176.5V181H27.5" fill="#fff" stroke="#000" stroke-width=".8"/><path d="M39.7 193V181.2q0-1.4 1.4-1.4h4.6l1.6 1.8h7.4q1.2 0 1.2 1.2v2.4" fill="url(#gfold2)" stroke="#000" stroke-width="1.1"/><path d="M39.8 193.3L43.7 184.6H59.3L55.5 193.3Z" fill="url(#gfold)" stroke="#000" stroke-width="1.1" stroke-linejoin="round"/><rect x="67.8" y="176.5" width="18.6" height="18.8" rx="1.6" fill="url(#gsave)" stroke="#000" stroke-width="1.2"/><rect x="71" y="177" width="12" height="7.5" fill="url(#ggrey)" stroke="#6a5c20" stroke-width=".6"/><rect x="71.8" y="188.6" width="9.8" height="6.4" fill="#b9b9b9" stroke="#222" stroke-width=".8"/><rect x="73.2" y="190" width="2.2" height="4.4" fill="#8a7a2c"/><circle cx="69.6" cy="178.3" r=".6" fill="#222"/><circle cx="84.6" cy="178.3" r=".6" fill="#222"/><path d="M90 193v6h-6z" fill="#6e6e6e"/><path d="M109.600 182.200H113.800L114.900 183.300V189.600L110.900 195.500H109.600Z" fill="#4c4c4c" stroke="#000" stroke-width="1" stroke-linejoin="round"/><path d="M111 186.200L114 183.600M111 189.800L114.200 186.800" stroke="#9a9a9a" stroke-width=".9"/><path d="M97.200 185.100Q97.600 179.500 100.400 176.300H112.700Q109.800 180 109.300 185.100Z" fill="url(#gpaper)" stroke="#000" stroke-width="1.100" stroke-linejoin="round"/><rect x="102.600" y="179.200" width="2.600" height="4" fill="#cfcfcf"/><path d="M105.200 180.400L107 179.600V182.600L105.200 183.600Z" fill="#3c3c3c"/><path d="M94.300 187.800L96.600 185.700H110V188.300H94.300Z" fill="#f2f2f2" stroke="#000" stroke-width="1.100" stroke-linejoin="round"/><rect x="94.500" y="188.800" width="15.500" height="3.500" rx=".6" fill="#fff" stroke="#000" stroke-width="1.100"/><rect x="95.800" y="190.500" width="13" height="1.300" fill="#c8c8c8"/><rect x="95.600" y="192.800" width="13.700" height="2.600" rx=".8" fill="#c6c6c6" stroke="#000" stroke-width="1.100"/><path d="M125.5 176.7H139.5V190.5L135 195.4H125.5Z" fill="url(#gpaper)" stroke="#000" stroke-width="1.2"/><path d="M135.2 195.2V191H139.3" fill="#fff" stroke="#000" stroke-width=".8"/><path d="M131 179.5L136 174.8L143 175.2V178.8L138.5 181L134 182Z" fill="#fff" stroke="#888" stroke-width=".7"/><path d="M131.5 179.5l3.5-3.2M133 180.5l3.5-3.4M134.6 181.4l3.4-3.2M136.3 181.5l2.4-2.4" stroke="#555" stroke-width=".8"/><rect x="143" y="174.2" width="2" height="5.6" fill="#000"/><path d="M156.4 178L163.8 192M165.6 178L158.2 192" stroke="#111" stroke-width="1.2"/><ellipse cx="156.3" cy="192.2" rx="1.6" ry="2.9" transform="rotate(32 156.3 192.2)" fill="#e8eaf4" stroke="#4a4f78" stroke-width=".8"/><ellipse cx="165.7" cy="192.2" rx="1.6" ry="2.9" transform="rotate(-32 165.7 192.2)" fill="#e8eaf4" stroke="#4a4f78" stroke-width=".8"/><circle cx="161" cy="187" r=".9" fill="#223"/><path d="M182.5 176.5H189.5L192.5 179.5V190.3H182.5Z" fill="url(#gpaper)" stroke="#000" stroke-width="1.1"/><path d="M186.7 182H193.6L196.8 185.2V195.4H186.7Z" fill="url(#gpaper)" stroke="#000" stroke-width="1.1"/><path d="M193.6 182V185.2H196.8" fill="#fff" stroke="#000" stroke-width=".7"/><rect x="210.6" y="177.3" width="12.8" height="17.4" rx="2" fill="url(#gclip)" stroke="#000" stroke-width="1.2"/><path d="M213.6 177.2q0-1.2 1.2-1.2h4.4q1.2 0 1.2 1.2v1.2q0 .8-.8.8h-5.2q-.8 0-.8-.8z" fill="#e6e6e6" stroke="#000" stroke-width="1"/><path d="M235.300 190.500L237.500 184L241.800 188.600Z" fill="#000"/><path d="M258 193v6h-6z" fill="#6e6e6e"/><rect x="299.600" y="195.400" width="2.400" height="1.600" fill="#333"/><path d="M327.0 187.9L320.5 194.5" stroke="#111" stroke-width="2" stroke-linecap="butt"/><circle cx="331.4" cy="183.4" r="6.3" fill="url(#glens)" stroke="#222" stroke-width="1.1"/><path d="M328.6 182.2h5.6M331.4 179.6v5.2M328.8 186.6h5.2" stroke="#111" stroke-width=".9"/><rect x="243.5" y="177" width="79" height="21" rx="3" fill="#000" opacity=".28" filter="url(#blur)"/><rect x="241.5" y="174.7" width="78.5" height="20.8" rx="3" fill="#fbfbfb"/><path d="M351.5 176.3H366.6V189.8H361" fill="none" stroke="#111" stroke-width="1" stroke-dasharray="1.6 1.6"/><path d="M351.3 190.4L346.5 195.2" stroke="#111" stroke-width="2" stroke-linecap="butt"/><circle cx="355.6" cy="186.2" r="6" fill="url(#glens)" stroke="#222" stroke-width="1.1"/><path d="M351.6 189.6h6.5" stroke="#666" stroke-width=".9" stroke-dasharray="1.6 1.6"/><path d="M375 176h4.3l-4.3 4.3zM395 176h-4.3l4.3 4.3zM375 196h4.3l-4.3-4.3zM395 196h-4.3l4.3-4.3z" fill="#000"/><path d="M382.3 188.5L377.8 193.2" stroke="#111" stroke-width="2" stroke-linecap="butt"/><circle cx="386.7" cy="184" r="6.3" fill="url(#glens)" stroke="#222" stroke-width="1.1"/><path d="M409.8 189.9L404.5 195.2" stroke="#111" stroke-width="2" stroke-linecap="butt"/><circle cx="415" cy="184.6" r="7.4" fill="url(#glens)" stroke="#222" stroke-width="1.1"/><circle cx="415" cy="184.6" r="6.2" fill="none" stroke="#222" stroke-width=".8"/><circle cx="416.8" cy="183" r="2.9" fill="#ffee22" stroke="#c8b400" stroke-width=".4"/><circle cx="413.6" cy="186.8" r="2.6" fill="#ffee44" stroke="#c8b400" stroke-width=".4"/><path d="M438.7 191.9L434.6 196.0" stroke="#111" stroke-width="1.5" stroke-linecap="butt"/><circle cx="442" cy="188.7" r="4.6" fill="url(#glens)" stroke="#222" stroke-width="1"/><path d="M431 185.600L435.200 178.700L439 184.600Z" fill="#000"/><path d="M436.600 181.400Q443 174.300 450.600 181.200L448.300 183.300Q443 178.600 439 184.200Z" fill="#2a2a2a"/><path d="M442.500 177.800Q447 177.600 450.600 181.200L448.300 183.300Q446 181 443.200 180.600Z" fill="#555"/><path d="M454 193v6h-6z" fill="#6e6e6e"/><rect x="458.6" y="176.6" width="20" height="18.4" fill="#c9c9c9" stroke="#000" stroke-width="1.3"/><path d="M468.6 176.6V195M458.6 185.6H478.6" stroke="#000" stroke-width="1.3"/><rect x="469.6" y="177.3" width="3.6" height="1" fill="#1428a0"/><path d="M482 193v6h-6z" fill="#6e6e6e"/><path d="M487.4 187.4q-.6-2.4 2.4-3.2l4.8-1 .8-2.2h6.2l1.2 2.4 2.6 1q.8 1.2.4 3z" fill="url(#gcar)"/><rect x="496.6" y="182" width="5.2" height="1.9" fill="#fff"/><circle cx="491" cy="187.7" r="1.7" fill="#222"/><circle cx="491" cy="187.7" r=".8" fill="#bbb"/><circle cx="502" cy="187.7" r="1.7" fill="#222"/><circle cx="502" cy="187.7" r=".8" fill="#bbb"/><circle cx="505.8" cy="186.8" r=".6" fill="#111"/><path d="M486 190.3H508" stroke="#aaa" stroke-width=".7"/><path d="M510 193v6h-6z" fill="#6e6e6e"/><path d="M514.5 190L522.5 181L536 185.5L529 196.5Z M518.5 185.5L532.5 191M516.5 187.7L530.8 193.7M520.5 183.2L534.2 188.3M526 182.2L518.5 192.2M529.5 183.4L522 193.8M533 184.6L525.6 195.2" fill="none" stroke="#b4b4b4" stroke-width=".8"/><path d="M525 187.6L528.4 183.2" stroke="#2a9a2a" stroke-width="1.3"/><path d="M526.6 188.4L533 190" stroke="#d02020" stroke-width="1.3"/><rect x="523.3" y="186.5" width="3" height="3" fill="#fff" stroke="#000" stroke-width="1"/><path d="M538 193v6h-6z" fill="#6e6e6e"/><circle cx="552.8" cy="186" r="8.6" fill="none" stroke="#8a8a8a" stroke-width="1"/><path d="M554.5 186.3H563.2" stroke="#111" stroke-width="1"/><circle cx="552.9" cy="186.1" r="1.5" fill="#fff" stroke="#111" stroke-width=".9"/><path d="M566 193v6h-6z" fill="#6e6e6e"/><path d="M588.2 175.6h3.6v3.4M573.8 196.4h-3.6v-3.2" fill="none" stroke="#000" stroke-width="1"/><circle cx="577.4" cy="182.4" r="3" fill="#ffee00" stroke="#a85a10" stroke-width=".8"/><rect x="582.3" y="181.6" width="6.2" height="6" fill="#ffee00" stroke="#a85a10" stroke-width=".8"/><path d="M576.3 193.4L579.3 188.2L582.3 193.4Z" fill="none" stroke="#a85a10" stroke-width=".8"/><path d="M594 193v6h-6z" fill="#6e6e6e"/><path d="M608.8 176.2a6.6 6.6 0 0 1 6.6 6.6c0 3-2.6 4.6-3.2 8.4l-.4 2.6q-.4 1.8-3 1.8t-3-1.800l-.4-2.600c-.6-3.800-3.200-5.400-3.200-8.400a6.600 6.600 0 0 1 6.600-6.600z" fill="url(#gbulb)" stroke="#111" stroke-width="1"/><path d="M606 192.400q2.800 1.200 5.600 0" fill="none" stroke="#eee" stroke-width="1"/><path d="M622 193v6h-6z" fill="#6e6e6e"/><path d="M633.8 186V181.600a3.200 3.600 0 0 1 6.400 0V186" fill="none" stroke="#000" stroke-width="2"/><rect x="631.6" y="185.600" width="10.800" height="8" rx="1" fill="url(#ggrey)" stroke="#000" stroke-width="1.200"/><path d="M634 188.300h6M634 190.800h6" stroke="#999" stroke-width="1"/><path d="M650 193v6h-6z" fill="#6e6e6e"/><path d="M656.5 177.200L673.300 182V190.800L663.500 195.400L656.500 185.800Z" fill="#1c2c9c" stroke="#111" stroke-width="1"/><path d="M656.500 177.200L673.300 182V185.400L664 188.800L656.500 181Z" fill="#ff5a0a"/><path d="M664 185.600L673.300 182V185.400L664 188.800Z" fill="#e01a00"/><path d="M656.500 181L664 188.800L673.300 185.400V188L664 191.800L656.500 183.600Z" fill="#f4f4f4"/><path d="M664 188.800L673.300 185.400V188L664 191.800Z" fill="#c8c8c8"/><path d="M656.500 177.200L673.300 182V190.800L663.500 195.400L656.500 185.800Z" fill="none" stroke="#111" stroke-width="1"/><path d="M678 193v6h-6z" fill="#6e6e6e"/><path d="M706 193v6h-6z" fill="#6e6e6e"/><circle cx="720.9" cy="185.900" r="8.600" fill="url(#gsph)" stroke="#1a1a1a" stroke-width="1"/><path d="M719.1 177.500Q716.6999999999999 186 719.5 194.300M712.5 188.300Q720.9 190.800 729.3 188.300" fill="none" stroke="#1e1e1e" stroke-width="1"/><path d="M712.6999999999999 188.800Q720.9 191 729.1 188.800A8.400 8.400 0 0 1 712.6999999999999 188.800Z" fill="#000" opacity=".28"/><rect x="737.500" y="174" width="23.500" height="23.500" fill="url(#dots)"/><circle cx="748.8" cy="185.900" r="8.600" fill="url(#gsph)" stroke="#1a1a1a" stroke-width="1"/><path d="M747.0 177.500Q744.5999999999999 186 747.4 194.300M740.4 188.300Q748.8 190.800 757.1999999999999 188.300" fill="none" stroke="#1e1e1e" stroke-width="1"/><path d="M740.5999999999999 188.800Q748.8 191 757.0 188.800A8.400 8.400 0 0 1 740.5999999999999 188.800Z" fill="#000" opacity=".28"/><path d="M762 193v6h-6z" fill="#6e6e6e"/><ellipse cx="781" cy="192.500" rx="9" ry="3.600" fill="#000" opacity=".16" filter="url(#blur1)"/><circle cx="776.800" cy="185.500" r="8.500" fill="url(#gblue)" stroke="#050a40" stroke-width=".8"/><ellipse cx="773.600" cy="181.300" rx="2.600" ry="1.700" transform="rotate(-35 773.600 181.300)" fill="#fff" opacity=".85"/><path d="M779.500 192.200Q783 190.600 784.200 187.500" fill="none" stroke="#6aa4ff" stroke-width="1.400" stroke-linecap="round"/><path d="M790 193v6h-6z" fill="#6e6e6e"/><ellipse cx="810" cy="186" rx="9" ry="8" fill="#fff" opacity=".45" filter="url(#blur1)"/><path d="M804 178.800L815 175.600L812.200 187.400Z" fill="url(#gcone)" stroke="#7a4a10" stroke-width=".6"/><ellipse cx="808.100" cy="183.100" rx="5.700" ry="1.700" transform="rotate(46 808.100 183.100)" fill="#fff3d8" stroke="#5a3a10" stroke-width=".7"/><path d="M818 193v6h-6z" fill="#6e6e6e"/><g transform="translate(833.200 186) scale(1.1 .86) translate(-833.200 -185.200)"><rect x="830.700" y="175" width="5" height="5.200" rx="1.200" transform="rotate(22 833.200 185.200)" fill="#ffe97a" stroke="#111" stroke-width="1.500"/><rect x="830.700" y="175" width="5" height="5.200" rx="1.200" transform="rotate(67 833.200 185.200)" fill="#ffe97a" stroke="#111" stroke-width="1.500"/><rect x="830.700" y="175" width="5" height="5.200" rx="1.200" transform="rotate(112 833.200 185.200)" fill="#ffe97a" stroke="#111" stroke-width="1.500"/><rect x="830.700" y="175" width="5" height="5.200" rx="1.200" transform="rotate(157 833.200 185.200)" fill="#ffe97a" stroke="#111" stroke-width="1.500"/><rect x="830.700" y="175" width="5" height="5.200" rx="1.200" transform="rotate(202 833.200 185.200)" fill="#ffe97a" stroke="#111" stroke-width="1.500"/><rect x="830.700" y="175" width="5" height="5.200" rx="1.200" transform="rotate(247 833.200 185.200)" fill="#ffe97a" stroke="#111" stroke-width="1.500"/><rect x="830.700" y="175" width="5" height="5.200" rx="1.200" transform="rotate(292 833.200 185.200)" fill="#ffe97a" stroke="#111" stroke-width="1.500"/><rect x="830.700" y="175" width="5" height="5.200" rx="1.200" transform="rotate(337 833.200 185.200)" fill="#ffe97a" stroke="#111" stroke-width="1.500"/><circle cx="833.200" cy="185.200" r="7.200" fill="#ffe97a" stroke="#111" stroke-width="1.400"/><rect x="831.400" y="175.800" width="3.600" height="5" transform="rotate(22 833.200 185.200)" fill="#ffe97a"/><rect x="831.400" y="175.800" width="3.600" height="5" transform="rotate(67 833.200 185.200)" fill="#ffe97a"/><rect x="831.400" y="175.800" width="3.600" height="5" transform="rotate(112 833.200 185.200)" fill="#ffe97a"/><rect x="831.400" y="175.800" width="3.600" height="5" transform="rotate(157 833.200 185.200)" fill="#ffe97a"/><rect x="831.400" y="175.800" width="3.600" height="5" transform="rotate(202 833.200 185.200)" fill="#ffe97a"/><rect x="831.400" y="175.800" width="3.600" height="5" transform="rotate(247 833.200 185.200)" fill="#ffe97a"/><rect x="831.400" y="175.800" width="3.600" height="5" transform="rotate(292 833.200 185.200)" fill="#ffe97a"/><rect x="831.400" y="175.800" width="3.600" height="5" transform="rotate(337 833.200 185.200)" fill="#ffe97a"/><path d="M826.500 190.800l2.200 2M832.600 194.200l2.800 0M838.800 191.800l1.900-2" stroke="#d86400" stroke-width="1.800"/></g><rect x="830.600" y="179.500" width="5.200" height="8" rx="2" fill="url(#gcyl)" stroke="#111" stroke-width=".9"/><path d="M846 193v6h-6z" fill="#6e6e6e"/><path d="M851 176.500H859M851 187.200H860M860.500 188V196M870.600 188V196M853 178V186M862.500 194.600H869" fill="none" stroke="#000" stroke-width="1.100"/><path d="M853 177l1.400 2.200h-2.800zM853 186.600l1.400-2.200h-2.800zM861.800 194.600l2.200-1.400v2.800zM869.600 194.600l-2.200-1.400v2.800z" fill="#000"/><rect x="858.600" y="175.300" width="2.400" height="2.400" fill="#fff" stroke="#000" stroke-width=".9"/><rect x="859.400" y="186" width="2.400" height="2.400" fill="#fff" stroke="#000" stroke-width=".9"/><rect x="869.400" y="186" width="2.400" height="2.400" fill="#fff" stroke="#000" stroke-width=".9"/><path d="M874 193v6h-6z" fill="#6e6e6e"/><circle cx="889.100" cy="185.900" r="10.900" fill="url(#ggh)" stroke="url(#gghs)" stroke-width="1.300"/><path d="M886.900 176.600L887.400 184" stroke="#8a9a88" stroke-width=".8" opacity=".7"/><path d="M886.300 176.600L886.600 183" stroke="#f0f8ea" stroke-width=".8" opacity=".8"/><path d="M888.400 184.600Q892 181.500 896.200 180" fill="none" stroke="#3a3a3a" stroke-width=".7" stroke-dasharray="1.300 .500"/><path d="M879.600 190.400L883 188.200L882.200 186.600L881.400 184.600L883.600 184L884.400 186Q886.500 184.800 888.300 185.800Q889.400 188 888.200 189.800L886.800 190L886.600 191.400L895.800 192L895.600 193L890.500 193.400L886 192.800Q884.800 193.200 884.600 195.600Q881.500 194 879.600 190.400Z" fill="#464646"/><path d="M902 193v6h-6z" fill="#6e6e6e"/><circle cx="917.200" cy="185.600" r="9.900" fill="url(#ghelp)"/><text x="917.200" y="192" text-anchor="middle" font-family="Liberation Serif,serif" font-weight="bold" font-size="18" fill="#fff">?</text><path d="M930 193v6h-6z" fill="#6e6e6e"/></svg>
<div class="a" style="left:683px;top:176px;width:19px;height:19px;border-radius:50%;background:conic-gradient(from 0deg,#ff2a00,#ffb000 12%,#e8f000 22%,#30d000 33%,#00c890 45%,#00b8f0 52%,#2030e0 64%,#8010c0 75%,#e0009a 88%,#ff2a00);border:1px solid #1a1a1a"></div>
<div class="a" style="left:687.500px;top:180.500px;width:10px;height:10px;border-radius:50%;background:#eceef2;border:.6px solid #666"></div>
<div class="t" style="left:248px;top:178.500px;color:#5a5a5a"><span style="font-size:12.800px">10.000</span> 毫米</div>
<svg style="left:0;top:224px" width="64" height="520" viewBox="0 224 64 520"><path d="M3 225.500H58M3 227.500H58" stroke="#cdd3e3" stroke-width="1"/><path d="M10.500 236.500V247.800L13.200 245.400L15.400 250.200L17.200 249.400L15 244.800L18.600 244.600Z" fill="#fff" stroke="#000" stroke-width="1" stroke-linejoin="miter"/><circle cx="42.400" cy="243.600" r="1.900" fill="#fff" stroke="#222" stroke-width=".9"/><path d="M56 251v6h-6z" fill="#6e6e6e"/><path d="M7.400 279.500L12.600 266.300L22.500 276.500" fill="none" stroke="#222" stroke-width=".9"/><circle cx="7.4" cy="279.5" r="1.1" fill="#fff" stroke="#000" stroke-width=".9"/><circle cx="12.6" cy="266.3" r="1.1" fill="#fff" stroke="#000" stroke-width=".9"/><circle cx="22.5" cy="276.5" r="1.1" fill="#fff" stroke="#000" stroke-width=".9"/><path d="M28 279v6h-6z" fill="#6e6e6e"/><path d="M35 266Q50 262 50 272T35 278" fill="none" stroke="#222" stroke-width=".9"/><rect x="33.7" y="264.7" width="2.6" height="2.6" fill="#fff" stroke="#000" stroke-width="1"/><rect x="47.7" y="261.7" width="2.6" height="2.6" fill="#fff" stroke="#000" stroke-width="1"/><rect x="33.7" y="276.7" width="2.6" height="2.6" fill="#fff" stroke="#000" stroke-width="1"/><rect x="49.7" y="278.7" width="2.6" height="2.6" fill="#fff" stroke="#000" stroke-width="1"/><path d="M56 279v6h-6z" fill="#6e6e6e"/><circle cx="15" cy="299.500" r="9.300" fill="none" stroke="#555" stroke-width=".9"/><path d="M15.300 299.600L21.500 293.500" stroke="#111" stroke-width="1"/><circle cx="15.3" cy="299.6" r="1.1" fill="#fff" stroke="#000" stroke-width=".9"/><circle cx="21.5" cy="293.5" r="1.1" fill="#fff" stroke="#000" stroke-width=".9"/><path d="M28 307v6h-6z" fill="#6e6e6e"/><ellipse cx="42.500" cy="299.700" rx="9.500" ry="6.700" fill="none" stroke="#333" stroke-width=".9"/><path d="M43 293V300H52" fill="none" stroke="#555" stroke-width=".8"/><rect x="41.7" y="291.7" width="2.6" height="2.6" fill="#fff" stroke="#000" stroke-width="1"/><rect x="41.7" y="298.7" width="2.6" height="2.6" fill="#fff" stroke="#000" stroke-width="1"/><rect x="50.7" y="298.7" width="2.6" height="2.6" fill="#fff" stroke="#000" stroke-width="1"/><path d="M56 307v6h-6z" fill="#6e6e6e"/><path d="M8.300 319.700Q18.500 320.500 23.500 328.500L8.300 336.500Z" fill="none" stroke="#333" stroke-width=".9"/><circle cx="8.3" cy="319.7" r="1.1" fill="#fff" stroke="#000" stroke-width=".9"/><circle cx="23.5" cy="328.5" r="1.1" fill="#fff" stroke="#000" stroke-width=".9"/><circle cx="8.3" cy="336.5" r="1.1" fill="#fff" stroke="#000" stroke-width=".9"/><path d="M28 335v6h-6z" fill="#6e6e6e"/><rect x="34.300" y="322.700" width="17.200" height="10.800" fill="none" stroke="#222" stroke-width="1"/><circle cx="51.5" cy="322.7" r="1.1" fill="#fff" stroke="#000" stroke-width=".9"/><circle cx="34.3" cy="333.5" r="1.1" fill="#fff" stroke="#000" stroke-width=".9"/><path d="M56 335v6h-6z" fill="#6e6e6e"/><path d="M6.500 355.500L10.800 348.200H19.400L23.800 355.500L19.400 362.800H10.800Z" fill="none" stroke="#333" stroke-width=".9"/><path d="M14.500 355.500H23" stroke="#111" stroke-width=".9"/><circle cx="14.5" cy="355.5" r="1.1" fill="#fff" stroke="#000" stroke-width=".9"/><circle cx="23" cy="355.5" r="0.9" fill="#fff" stroke="#000" stroke-width=".9"/><path d="M28 363v6h-6z" fill="#6e6e6e"/><path d="M36 349H51.500V364" fill="none" stroke="#aaa" stroke-width=".7"/><path d="M35.500 349H40Q51 349 51 364" fill="none" stroke="#000" stroke-width="1.700"/><rect x="33.7" y="347.7" width="2.6" height="2.6" fill="#fff" stroke="#000" stroke-width="1"/><rect x="49.7" y="362.7" width="2.6" height="2.6" fill="#fff" stroke="#000" stroke-width="1"/><path d="M56 363v6h-6z" fill="#6e6e6e"/><path d="M11 376L23 376L18 392L7 387Z" fill="url(#gbl)" stroke="#223" stroke-width=".9"/><path d="M17 376L12.500 389.500M9 381.500L20.500 384" stroke="#223" stroke-width=".8" fill="none"/><rect x="9.7" y="374.7" width="2.6" height="2.6" fill="#fff" stroke="#000" stroke-width="1"/><rect x="21.7" y="374.7" width="2.6" height="2.6" fill="#fff" stroke="#000" stroke-width="1"/><rect x="16.7" y="390.7" width="2.6" height="2.6" fill="#fff" stroke="#000" stroke-width="1"/><rect x="5.7" y="385.7" width="2.6" height="2.6" fill="#fff" stroke="#000" stroke-width="1"/><path d="M28 391v6h-6z" fill="#6e6e6e"/><path d="M35 379.500L42 374.500Q51 376 51.500 385L51 388.500L44.500 393V385Q43 380.500 35 379.500Z" fill="#fff" stroke="#111" stroke-width=".9"/><path d="M40.500 380.800Q44 382.500 44.500 386L51.300 381.600Q50 377.500 46.300 375.800Z" fill="url(#gbl2)"/><path d="M56 391v6h-6z" fill="#6e6e6e"/><path d="M6.500 408L14.500 403.500L22.500 408V417L15 421L6.500 417Z" fill="#5a74ee" stroke="#112" stroke-width=".9"/><path d="M6.500 408L14.500 403.500L22.500 408L15 411.500Z" fill="#b4c0ff"/><path d="M15 411.500L22.500 408V417L15 421Z" fill="#2c44c0"/><path d="M6.500 408L15 411.500L22.500 408M15 411.500V421" fill="none" stroke="#112" stroke-width=".7"/><path d="M28 419v6h-6z" fill="#6e6e6e"/><circle cx="39.500" cy="415.500" r="6.800" fill="url(#gbls)" stroke="#112" stroke-width=".9"/><path d="M33.500 412.500Q40 417 45.500 418.500M36 421Q39 415 42.500 409.500" fill="none" stroke="#112" stroke-width=".8"/><circle cx="46.500" cy="408.500" r="6.800" fill="url(#gbls)" stroke="#112" stroke-width=".9"/><path d="M40.300 406Q46 410 53 410M44 414.500Q46 408 49.500 402.500" fill="none" stroke="#112" stroke-width=".8"/><path d="M56 419v6h-6z" fill="#6e6e6e"/><ellipse cx="15" cy="432" rx="5.800" ry="2.600" fill="#f4f4f8" stroke="#111" stroke-width=".9"/><path d="M4.200 437.800Q15 443 25.800 437.800V447.200Q15 452.500 4.200 447.200Z" fill="#4a63e6" stroke="#112" stroke-width=".9"/><ellipse cx="15" cy="445.400" rx="5.400" ry="2.400" fill="#9fb0ff" stroke="#fff" stroke-width="1.500"/><path d="M28 447v6h-6z" fill="#6e6e6e"/><path d="M40.600 430.500Q46 434.500 53.800 434.500Q50 442 44 448.800Q38 446 32.600 443.600Q37.500 437 40.600 430.500Z" fill="url(#gbl)" stroke="#223" stroke-width=".8"/><path d="M36.600 437.200Q43 440.500 49.600 441.800M45 432.800L36.400 445.300M49.400 434.200L40.200 447.200M40.600 430.500L40.200 447.200M45 432.800L44 448.800M49.400 434.200L49.600 441.800M36.600 437.200L36.400 445.300" fill="none" stroke="#223" stroke-width=".6"/><path d="M56 447v6h-6z" fill="#6e6e6e"/><g transform="translate(11.4 464.3) rotate(-24)"><g fill="#3a2400" stroke="#3a2400" stroke-width="1.3"><rect x="-3.600" y="-3.600" width="7.200" height="7.200" rx=".8"/><circle cx="0" cy="-4.900" r="2"/><circle cx="4.900" cy="0" r="2"/><circle cx="0" cy="4.900" r="2"/><circle cx="-4.900" cy="0" r="2"/></g><g fill="url(#gor)"><rect x="-3.600" y="-3.600" width="7.200" height="7.200" rx=".8"/><circle cx="0" cy="-4.900" r="2"/><circle cx="4.900" cy="0" r="2"/><circle cx="0" cy="4.900" r="2"/><circle cx="-4.900" cy="0" r="2"/></g></g><g transform="translate(18.6 472) rotate(-24)"><g fill="#111" stroke="#111" stroke-width="1.3"><rect x="-3.600" y="-3.600" width="7.200" height="7.200" rx=".8"/><circle cx="0" cy="-4.900" r="2"/><circle cx="4.900" cy="0" r="2"/><circle cx="0" cy="4.900" r="2"/><circle cx="-4.900" cy="0" r="2"/></g><g fill="#fff"><rect x="-3.600" y="-3.600" width="7.200" height="7.200" rx=".8"/><circle cx="0" cy="-4.900" r="2"/><circle cx="4.900" cy="0" r="2"/><circle cx="0" cy="4.900" r="2"/><circle cx="-4.900" cy="0" r="2"/></g></g><path d="M31 479.500Q31 470 35.500 460.500L36 472.500L49 459.500L43 473L52.500 474.500L44.500 477.500L45.500 479.500Z" fill="url(#gor2)" stroke="#3a2000" stroke-width=".6"/><path d="M13.500 486H20.500L15.500 498H13.500Z" fill="#1c2f9a"/><rect x="4.300" y="494.500" width="10" height="4.800" fill="#fff" stroke="#000" stroke-width="1"/><path d="M15 499.500L18.500 496.300L23.800 501.500L20.300 504.800Z" fill="#fff" stroke="#333" stroke-width=".8"/><path d="M42.500 487H49.500L44.500 500H42.500Z" fill="#1c2f9a"/><rect x="33.300" y="495.500" width="18.300" height="4.800" fill="#fff" stroke="#000" stroke-width="1"/><path d="M43 495.500H46.300L44.500 500.300H43Z" fill="#1c2f9a"/><circle cx="15" cy="521" r="4.600" fill="#9aa4ff" stroke="#000" stroke-width="1.500"/><circle cx="11.800" cy="526.500" r="4.600" fill="#fff" stroke="#000" stroke-width="1.500"/><circle cx="18.500" cy="526.500" r="4.600" fill="#1c1c8c" stroke="#000" stroke-width="1.500"/><circle cx="15" cy="521" r="3.600" fill="#9aa4ff"/><circle cx="11.800" cy="526.500" r="3.300" fill="#fff"/><circle cx="18.500" cy="526.500" r="3.300" fill="#1c1c8c"/><path d="M28 531v6h-6z" fill="#6e6e6e"/><circle cx="43" cy="519.700" r="3.600" fill="#9aa0ff" stroke="#667" stroke-width=".6"/><circle cx="38" cy="528" r="3.600" fill="#fff" stroke="#222" stroke-width=".8"/><circle cx="48" cy="528" r="3.600" fill="#1c1c8c"/><path d="M4.500 546.500Q16 546 20 561" fill="none" stroke="#000" stroke-width="1.500"/><rect x="8.7" y="545.5" width="2.6" height="2.6" fill="#fff" stroke="#000" stroke-width="1"/><rect x="18.7" y="555.7" width="2.6" height="2.6" fill="#fff" stroke="#000" stroke-width="1"/><path d="M32 543.500H39.500L52 555.500V562.500" fill="none" stroke="#000" stroke-width="1" stroke-dasharray="1.200 1.400"/><path d="M32.500 547.800Q46.500 547.500 48 563" fill="none" stroke="#000" stroke-width="1.900"/><rect x="38.5" y="541.7" width="2.6" height="2.6" fill="#fff" stroke="#000" stroke-width="1"/><rect x="50.7" y="553.7" width="2.6" height="2.6" fill="#fff" stroke="#000" stroke-width="1"/><path d="M56 559v6h-6z" fill="#6e6e6e"/><path transform="translate(0 -2) scale(1 1.06) translate(0 -32.4)" d="M6 573L22.500 576.500V581.500L20.800 581L19.800 578.800L16.800 578.200L17.500 588L20 589.200V590.500L10.500 588.500V587.200L12.800 587L12.300 577.200L9.300 576.700L8 578.500L6.300 578Z" fill="url(#gbl2)" stroke="#112" stroke-width=".9"/><rect x="34.500" y="583.500" width="5.800" height="5.200" fill="#f4f4f4" stroke="#000" stroke-width="1"/><rect x="46.500" y="570.800" width="5.800" height="5.200" fill="url(#gbl)" stroke="#000" stroke-width="1"/><path d="M40.500 583L45.500 577.800" stroke="#000" stroke-width=".9"/><path d="M46.300 577l-.6 3-2.300-2.300z" fill="#000"/><path d="M56 587v6h-6z" fill="#6e6e6e"/><rect x="6.500" y="598.600" width="5.600" height="5.400" fill="url(#gbl)" stroke="#000" stroke-width="1"/><rect x="18.500" y="601.600" width="5.600" height="5.400" fill="url(#gbl)" stroke="#000" stroke-width="1"/><rect x="14.800" y="604.800" width="5.600" height="5.400" fill="url(#gbl)" stroke="#000" stroke-width="1"/><rect x="6.500" y="610.600" width="5.600" height="5.400" fill="#f0f0f0" stroke="#000" stroke-width="1"/><rect x="18.500" y="612.600" width="5.600" height="5.400" fill="url(#gbl)" stroke="#000" stroke-width="1"/><rect x="32.500" y="599.700" width="4.800" height="13.600" fill="#fff" stroke="#000" stroke-width="1"/><path d="M40.300 613.500L49.800 604.500L52.800 607.600L43.300 616.800Z" fill="url(#gbl2)" stroke="#223" stroke-width=".8"/><path d="M38 602.500Q43.500 602 45.500 605" fill="none" stroke="#000" stroke-width=".8"/><path d="M46.300 606l-2.800-.6 2-1.800z" fill="#000"/><path d="M5.500 632L14.500 626L24.500 630V641.500L15.500 646.500L5.500 642Z" fill="#5a74ee" stroke="#112" stroke-width=".9"/><path d="M5.500 632L14.500 626L24.500 630L15 635.500Z" fill="#a9b7ff"/><path d="M15 635.500L24.500 630V641.500L15.500 646.500Z" fill="#3048c8"/><path d="M11.500 640L18 637.500L21 639V643.500L15.500 646.300L11.500 644.500Z" fill="#fff" stroke="#223" stroke-width=".6"/><path d="M11.500 640L15.500 641.800L21 639M15.500 641.800V646.300" fill="none" stroke="#778" stroke-width=".6"/><path d="M28 643v6h-6z" fill="#6e6e6e"/><path d="M32.500 644.500L38 639.500H53.500L48 644.500Z" fill="#5a74ee" stroke="#000" stroke-width="1"/><path d="M38 639.500H53.500" stroke="#000" stroke-width="1" stroke-dasharray="2 1.500"/><path d="M37.500 641.500V632M43 641.500V632M48.800 641.500V632" stroke="#fff" stroke-width="1.500"/><path d="M37.500 629.500l1.900 3h-3.800zM43 629.500l1.900 3h-3.800zM48.800 629.500l1.900 3h-3.800z" fill="#fff"/><path d="M56 643v6h-6z" fill="#6e6e6e"/><rect x="5.3" y="654.3" width="4.400" height="4.400" fill="url(#gbl)" stroke="#000" stroke-width="1"/><rect x="12.3" y="654.3" width="4.400" height="4.400" fill="url(#gbl)" stroke="#000" stroke-width="1"/><rect x="19.3" y="654.3" width="4.400" height="4.400" fill="url(#gbl)" stroke="#000" stroke-width="1"/><rect x="5.3" y="661.5" width="4.400" height="4.400" fill="url(#gbl)" stroke="#000" stroke-width="1"/><rect x="12.3" y="661.5" width="4.400" height="4.400" fill="url(#gbl)" stroke="#000" stroke-width="1"/><rect x="19.3" y="661.5" width="4.400" height="4.400" fill="url(#gbl)" stroke="#000" stroke-width="1"/><rect x="5.3" y="668.7" width="4.400" height="4.400" fill="#fff" stroke="#000" stroke-width="1"/><rect x="12.3" y="668.7" width="4.400" height="4.400" fill="url(#gbl)" stroke="#000" stroke-width="1"/><rect x="19.3" y="668.7" width="4.400" height="4.400" fill="url(#gbl)" stroke="#000" stroke-width="1"/><path d="M28 671v6h-6z" fill="#6e6e6e"/><rect x="38.800" y="654.800" width="8.600" height="4.400" fill="#eee" stroke="#000" stroke-width="1"/><rect x="40.300" y="661.300" width="5.200" height="4.600" fill="#eee" stroke="#000" stroke-width="1"/><rect x="39.300" y="668" width="7.400" height="5.400" fill="#fff" stroke="#000" stroke-width="1"/><path d="M43 653V675" stroke="#d01818" stroke-width="1.600"/><path d="M56 671v6h-6z" fill="#6e6e6e"/><path d="M5.500 686L9 683.500L12.500 684.500L13.500 696L8.500 698.800L5.500 697Z" fill="#f2f2f2" stroke="#111" stroke-width=".8"/><path d="M13.500 681.500L17 683.500L15 687Z" fill="#fff" stroke="#111" stroke-width=".7"/><path d="M11 697L16 683.500L23.500 686.500L18.500 700.500L15.500 701.500Z" fill="url(#gbl2)" stroke="#112" stroke-width=".8"/><path d="M15.500 701.500L20.500 688" stroke="#223" stroke-width=".6"/><path d="M28 699v6h-6z" fill="#6e6e6e"/><path d="M33.500 694.300L36.300 692.500L38.500 697Q43 688 51.800 683Q44 691 39.300 700.500L37 700.500Z" fill="#000"/><path d="M56 699v6h-6z" fill="#6e6e6e"/><path d="M5.500 716L10.500 712.500L17 715V722.500L12 725.500L5.500 722.500Z" fill="#bdbdbd" stroke="#111" stroke-width=".8"/><path d="M5.500 716L10.500 712.500L17 715L12 718Z" fill="#e8e8e8"/><path d="M12 718L17 715V722.500L12 725.500Z" fill="#8e8e8e"/><path d="M19.500 713.500L24.500 724Q22 727.500 17.500 727Q14.500 726 14.800 724Z" fill="url(#ggrey)" stroke="#111" stroke-width=".8"/><path d="M28 727v6h-6z" fill="#6e6e6e"/><path d="M34.500 726L43 716.500L51.500 724.500L43.500 730.500Z" fill="#f4b84a" stroke="#7a4a00" stroke-width=".6"/><path d="M43 716.500L43.500 730.500L51.500 724.500Z" fill="#e08a10"/><path d="M43 716.500L43.500 730.500L34.500 726Z" fill="#ffd07a"/><path d="M40.500 713L46 708.500L53 709V712.500L48.500 714.500L44 715.500Z" fill="#fff" stroke="#888" stroke-width=".6"/><path d="M41 713l3.500-3.200M42.500 714l3.500-3.400M44.200 714.800l3.400-3.200" stroke="#555" stroke-width=".7"/><rect x="53" y="708" width="1.800" height="5.400" fill="#000"/><path d="M56 727v6h-6z" fill="#6e6e6e"/></svg>
<div class="t" style="left:1731px;top:227px;font-size:13px;line-height:16px;height:16px;color:#2a2a2a">属性: 视图属性</div>
<div class="a" style="left:1821px;top:233px;width:98px;height:1px;background:#cfd6e8"></div>
<div class="a" style="left:1821px;top:235px;width:98px;height:1px;background:#cfd6e8"></div>
<div class="a" style="left:1729px;top:275px;width:189px;height:714px;border:1px solid #c3cbe0;border-top:none"></div>
<div class="a" style="left:1761px;top:275px;width:157px;height:1px;background:#c3cbe0"></div>
<div class="a" style="left:1729px;top:247px;width:33px;height:29px;border:1px solid #c3cbe0;border-bottom:none;border-radius:2px 2px 0 0"></div>
<div class="a" style="left:1736.500px;top:255.500px;width:15px;height:15px;border-radius:50%;background:conic-gradient(from 0deg,#ff2a00,#ffb000 12%,#e8f000 22%,#30d000 33%,#00c890 45%,#00b8f0 52%,#2030e0 64%,#8010c0 75%,#e0009a 88%,#ff2a00);border:1px solid #111"></div>
<div class="a" style="left:1739.800px;top:258.800px;width:8.400px;height:8.400px;border-radius:50%;background:#fff;border:.5px solid #444"></div>
<svg style="left:1728px;top:246px" width="192" height="64" viewBox="1728 246 192 64"><ellipse cx="1777" cy="270" rx="7" ry="1.600" fill="#000" opacity=".25"/><circle cx="1776.300" cy="264.300" r="6.300" fill="url(#gblue)" stroke="#050a40" stroke-width=".7"/><ellipse cx="1774" cy="261.300" rx="2" ry="1.300" transform="rotate(-35 1774 261.300)" fill="#fff" opacity=".85"/><path d="M1777.500 259.500Q1779.500 256 1783 256.800V255L1785.500 257.600L1783 260.400V258.600Q1781 258 1779.500 260.500Z" fill="#fff" stroke="#333" stroke-width=".6"/><rect x="1784.300" y="255" width="1.200" height="5" fill="#111"/><path d="M1805.200 266.500L1812.500 258.500L1816 262L1808.500 269.800Z" fill="#f4f4f4" stroke="#555" stroke-width=".7"/><path d="M1809.500 261.800L1812.500 258.500L1816 262L1813 265.300Z" fill="#f05a14"/><path d="M1812.500 258.500L1815.500 256.200L1817.600 258.400L1816 262Z" fill="#c8c8c8" stroke="#555" stroke-width=".6"/><path d="M1804.500 266L1809 270.500" stroke="#666" stroke-width="1.200"/><path d="M1836.500 267V259.300q0-1 1-1h3.200l1.200 1.300h5.400q.9 0 .9.900v1.500" fill="url(#gfold2)" stroke="#333" stroke-width=".8"/><path d="M1836.600 267.300L1839.300 261.800H1850.300L1847.600 267.300Z" fill="url(#gfold)" stroke="#333" stroke-width=".8" stroke-linejoin="round"/><rect x="1870.500" y="256.500" width="13" height="13" fill="#3a52c8" stroke="#555" stroke-width="1"/><rect x="1871" y="257" width="12" height="2" fill="#8a98e8"/><rect x="1871" y="267.500" width="12" height="1.500" fill="#e8e8e8"/><circle cx="1877" cy="264.500" r="4.600" fill="#6a82ea"/><text x="1877" y="268" text-anchor="middle" font-family="Liberation Serif,serif" font-weight="bold" font-size="9.500" fill="#fff">?</text><path d="M1908.67 260.23L1910.00 260.10L1911.01 261.80L1911.99 262.10L1913.78 261.25L1914.81 262.09L1914.32 264.01L1914.80 264.91L1916.67 265.57L1916.80 266.90L1915.10 267.91L1914.80 268.89L1915.65 270.68L1914.81 271.71L1912.89 271.22L1911.99 271.70L1911.33 273.57L1910.00 273.70L1908.99 272.00L1908.01 271.70L1906.22 272.55L1905.19 271.71L1905.68 269.79L1905.20 268.89L1903.33 268.23L1903.20 266.90L1904.90 265.89L1905.20 264.91L1904.35 263.12L1905.19 262.09L1907.11 262.58L1908.01 262.10Z" fill="none" stroke="#c9cedb" stroke-width=".9" stroke-linejoin="round"/><circle cx="1910" cy="266.900" r="1.800" fill="none" stroke="#c9cedb" stroke-width=".9"/><rect x="1736" y="280" width="28" height="28" fill="#abbbee"/><path d="M1740.300 292q0-2.200 2.200-2.600l2.800-.6 1.400-2.200h5.600l1.600 2.200 4 .8q2.200.5 2.200 2.600v7.600q0 1.600-1.600 1.600h-16.600q-1.600 0-1.600-1.600z" fill="#1e1e1e"/><path d="M1741 291.500q2-2 4.500-2l1.500-2.500h5l1.500 2.500q3.500.5 5.800 2" fill="none" stroke="#555" stroke-width=".8"/><circle cx="1751.500" cy="295.800" r="5" fill="#111" stroke="#b4b4b4" stroke-width="1.100"/><circle cx="1751.500" cy="295.800" r="3" fill="#1e2c3c" stroke="#444" stroke-width=".6"/><circle cx="1752.400" cy="296.600" r="1.200" fill="#3a8a4a"/><circle cx="1750.300" cy="294.500" r=".8" fill="#5a78b8"/><rect x="1770.500" y="283.500" width="23" height="21" rx="1" fill="#b4b4b4" stroke="#3a3a3a" stroke-width="1"/><rect x="1773.500" y="286.500" width="17" height="15" fill="#fff" stroke="#5ab4e8" stroke-width="1.600"/><rect x="1775" y="288" width="14" height="12" fill="#fff" stroke="#e81818" stroke-width="1.200"/></svg>
<div class="t" style="left:1738px;top:322.6px;font-size:14.700px;line-height:18px;height:18px;color:#2a2a2a">工作视窗</div>
<div class="a" style="left:1738px;top:346px;width:172px;height:1px;background:#dde1ea"></div>
<div class="a" style="left:1753px;top:371px;width:157px;height:1px;background:#dde1ea"></div>
<div class="a" style="left:1822px;top:347px;width:1px;height:25px;background:#dde1ea"></div>
<div class="a" style="left:1823px;top:347px;width:87px;height:24px;background:#fff"></div>
<div class="t" style="left:1757px;top:352px;font-size:13px;line-height:16px;height:16px;color:#222">标题</div>
<div class="t" style="left:1827px;top:352px;font-size:13px;line-height:16px;height:16px;color:#222"><span style="font-size:14px">Top</span></div>
<div class="a" style="left:1753px;top:396px;width:157px;height:1px;background:#dde1ea"></div>
<div class="a" style="left:1822px;top:372px;width:1px;height:25px;background:#dde1ea"></div>
<div class="a" style="left:1823px;top:372px;width:87px;height:24px;background:#fff"></div>
<div class="t" style="left:1757px;top:377px;font-size:13px;line-height:16px;height:16px;color:#222">宽度</div>
<div class="t" style="left:1827px;top:377px;font-size:13px;line-height:16px;height:16px;color:#222"><span style="font-size:14px">825</span></div>
<div class="a" style="left:1753px;top:421px;width:157px;height:1px;background:#dde1ea"></div>
<div class="a" style="left:1822px;top:397px;width:1px;height:25px;background:#dde1ea"></div>
<div class="a" style="left:1823px;top:397px;width:87px;height:24px;background:#fff"></div>
<div class="t" style="left:1757px;top:402px;font-size:13px;line-height:16px;height:16px;color:#222">高度</div>
<div class="t" style="left:1827px;top:402px;font-size:13px;line-height:16px;height:16px;color:#222"><span style="font-size:14px">371</span></div>
<div class="a" style="left:1753px;top:446px;width:157px;height:1px;background:#dde1ea"></div>
<div class="a" style="left:1822px;top:422px;width:1px;height:25px;background:#dde1ea"></div>
<div class="a" style="left:1823px;top:422px;width:87px;height:24px;background:#fff"></div>
<div class="t" style="left:1757px;top:427px;font-size:13px;line-height:16px;height:16px;color:#222">投影</div>
<div class="t" style="left:1827px;top:427px;font-size:13px;line-height:16px;height:16px;color:#222">平行</div>
<div class="a" style="left:1886.500px;top:423.500px;width:22px;height:22px;background:#fdfdfd;border:1px solid #cfcfcf;border-bottom-color:#b8b8b8;border-radius:4px"></div>
<svg style="left:1886px;top:423px" width="23" height="23" viewBox="0 0 23 23"><path d="M8 10L11.500 13.500L15 10" fill="none" stroke="#444" stroke-width="1"/></svg>
<div class="a" style="left:1753px;top:471px;width:157px;height:1px;background:#dde1ea"></div>
<div class="a" style="left:1822px;top:447px;width:1px;height:25px;background:#dde1ea"></div>
<div class="t" style="left:1757px;top:452px;font-size:13px;line-height:16px;height:16px;color:#222">锁定</div>
<div class="a" style="left:1825px;top:453px;width:13px;height:13px;background:#f6f6f6;border:1px solid #5c5c5c;border-radius:3px"></div>
<div class="t" style="left:1738px;top:478.6px;font-size:14.700px;line-height:18px;height:18px;color:#2a2a2a">摄像机</div>
<div class="a" style="left:1738px;top:502px;width:172px;height:1px;background:#dde1ea"></div>
<div class="a" style="left:1753px;top:527px;width:157px;height:1px;background:#dde1ea"></div>
<div class="a" style="left:1822px;top:503px;width:1px;height:25px;background:#dde1ea"></div>
<div class="a" style="left:1823px;top:503px;width:87px;height:24px;background:#fff"></div>
<div class="t" style="left:1757px;top:508px;font-size:13px;line-height:16px;height:16px;color:#6e6e6e"><span style="font-size:12.600px">Lens Len...</span></div>
<div class="t" style="left:1827px;top:508px;font-size:13px;line-height:16px;height:16px;color:#222"><span style="font-size:14px">50.0</span></div>
<div class="a" style="left:1753px;top:552px;width:157px;height:1px;background:#dde1ea"></div>
<div class="a" style="left:1822px;top:528px;width:1px;height:25px;background:#dde1ea"></div>
<div class="a" style="left:1823px;top:528px;width:87px;height:24px;background:#fff"></div>
<div class="t" style="left:1757px;top:533px;font-size:13px;line-height:16px;height:16px;color:#222">旋转</div>
<div class="t" style="left:1827px;top:533px;font-size:13px;line-height:16px;height:16px;color:#222"><span style="font-size:14px">0.0</span></div>
<div class="a" style="left:1753px;top:577px;width:157px;height:1px;background:#dde1ea"></div>
<div class="a" style="left:1822px;top:553px;width:1px;height:25px;background:#dde1ea"></div>
<div class="a" style="left:1823px;top:553px;width:87px;height:24px;background:#fff"></div>
<div class="t" style="left:1757px;top:558px;font-size:13px;line-height:16px;height:16px;color:#222"><span style="font-size:14px">X</span> 座标</div>
<div class="t" style="left:1827px;top:558px;font-size:13px;line-height:16px;height:16px;color:#222"><span style="font-size:14px">0.0</span></div>
<div class="a" style="left:1753px;top:602px;width:157px;height:1px;background:#dde1ea"></div>
<div class="a" style="left:1822px;top:578px;width:1px;height:25px;background:#dde1ea"></div>
<div class="a" style="left:1823px;top:578px;width:87px;height:24px;background:#fff"></div>
<div class="t" style="left:1757px;top:583px;font-size:13px;line-height:16px;height:16px;color:#222"><span style="font-size:14px">Y</span> 座标</div>
<div class="t" style="left:1827px;top:583px;font-size:13px;line-height:16px;height:16px;color:#222"><span style="font-size:14px">0.0</span></div>
<div class="a" style="left:1753px;top:627px;width:157px;height:1px;background:#dde1ea"></div>
<div class="a" style="left:1822px;top:603px;width:1px;height:25px;background:#dde1ea"></div>
<div class="a" style="left:1823px;top:603px;width:87px;height:24px;background:#fff"></div>
<div class="t" style="left:1757px;top:608px;font-size:13px;line-height:16px;height:16px;color:#222"><span style="font-size:14px">Z</span> 座标</div>
<div class="t" style="left:1827px;top:608px;font-size:13px;line-height:16px;height:16px;color:#222"><span style="font-size:14px">80.212</span></div>
<div class="a" style="left:1753px;top:652px;width:157px;height:1px;background:#dde1ea"></div>
<div class="a" style="left:1822px;top:628px;width:1px;height:25px;background:#dde1ea"></div>
<div class="t" style="left:1757px;top:633px;font-size:13px;line-height:16px;height:16px;color:#222">目标点距<span style="font-size:14px">...</span></div>
<div class="t" style="left:1827px;top:633px;font-size:13px;line-height:16px;height:16px;color:#222"><span style="font-size:14px">80.212</span></div>
<div class="a" style="left:1753px;top:677px;width:157px;height:1px;background:#dde1ea"></div>
<div class="a" style="left:1822px;top:653px;width:1px;height:25px;background:#dde1ea"></div>
<div class="t" style="left:1757px;top:658px;font-size:13px;line-height:16px;height:16px;color:#222">位置</div>
<div class="a" style="left:1824px;top:654.5px;width:84.500px;height:22px;background:#fdfdfd;border:1px solid #cfcfcf;border-bottom-color:#b8b8b8;border-radius:4px;text-align:center;font-size:13px;line-height:20px;height:22px;color:#222">放置...</div>
<div class="t" style="left:1738px;top:684.6px;font-size:14.700px;line-height:18px;height:18px;color:#2a2a2a">目标点</div>
<div class="a" style="left:1738px;top:708px;width:172px;height:1px;background:#dde1ea"></div>
<div class="a" style="left:1753px;top:733px;width:157px;height:1px;background:#dde1ea"></div>
<div class="a" style="left:1822px;top:709px;width:1px;height:25px;background:#dde1ea"></div>
<div class="a" style="left:1823px;top:709px;width:87px;height:24px;background:#fff"></div>
<div class="t" style="left:1757px;top:714px;font-size:13px;line-height:16px;height:16px;color:#222"><span style="font-size:14px">X</span> 座标</div>
<div class="t" style="left:1827px;top:714px;font-size:13px;line-height:16px;height:16px;color:#222"><span style="font-size:14px">0.0</span></div>
<div class="a" style="left:1753px;top:758px;width:157px;height:1px;background:#dde1ea"></div>
<div class="a" style="left:1822px;top:734px;width:1px;height:25px;background:#dde1ea"></div>
<div class="a" style="left:1823px;top:734px;width:87px;height:24px;background:#fff"></div>
<div class="t" style="left:1757px;top:739px;font-size:13px;line-height:16px;height:16px;color:#222"><span style="font-size:14px">Y</span> 座标</div>
<div class="t" style="left:1827px;top:739px;font-size:13px;line-height:16px;height:16px;color:#222"><span style="font-size:14px">0.0</span></div>
<div class="a" style="left:1753px;top:783px;width:157px;height:1px;background:#dde1ea"></div>
<div class="a" style="left:1822px;top:759px;width:1px;height:25px;background:#dde1ea"></div>
<div class="a" style="left:1823px;top:759px;width:87px;height:24px;background:#fff"></div>
<div class="t" style="left:1757px;top:764px;font-size:13px;line-height:16px;height:16px;color:#222"><span style="font-size:14px">Z</span> 座标</div>
<div class="t" style="left:1827px;top:764px;font-size:13px;line-height:16px;height:16px;color:#222"><span style="font-size:14px">0.0</span></div>
<div class="a" style="left:1753px;top:808px;width:157px;height:1px;background:#dde1ea"></div>
<div class="a" style="left:1822px;top:784px;width:1px;height:25px;background:#dde1ea"></div>
<div class="t" style="left:1757px;top:789px;font-size:13px;line-height:16px;height:16px;color:#222">位置</div>
<div class="a" style="left:1824px;top:785.5px;width:84.500px;height:22px;background:#fdfdfd;border:1px solid #cfcfcf;border-bottom-color:#b8b8b8;border-radius:4px;text-align:center;font-size:13px;line-height:20px;height:22px;color:#222">放置...</div>
<div class="t" style="left:1738px;top:815.6px;font-size:14.700px;line-height:18px;height:18px;color:#2a2a2a">底色图案</div>
<div class="a" style="left:1738px;top:839px;width:172px;height:1px;background:#dde1ea"></div>
<div class="a" style="left:1753px;top:864px;width:157px;height:1px;background:#dde1ea"></div>
<div class="a" style="left:1822px;top:840px;width:1px;height:25px;background:#dde1ea"></div>
<div class="a" style="left:1823px;top:840px;width:87px;height:24px;background:#fff"></div>
<div class="t" style="left:1757px;top:845px;font-size:13px;line-height:16px;height:16px;color:#222">文件名称</div>
<div class="t" style="left:1827px;top:845px;font-size:13px;line-height:16px;height:16px;color:#222">(无)</div>
<div class="a" style="left:1886.500px;top:841.500px;width:22px;height:22px;background:#fdfdfd;border:1px solid #cfcfcf;border-bottom-color:#b8b8b8;border-radius:4px;text-align:center;font-size:13px;line-height:17px;font-weight:bold;color:#222">...</div>
<div class="a" style="left:1753px;top:889px;width:157px;height:1px;background:#dde1ea"></div>
<div class="a" style="left:1822px;top:865px;width:1px;height:25px;background:#dde1ea"></div>
<div class="t" style="left:1757px;top:870px;font-size:13px;line-height:16px;height:16px;color:#222">显示</div>
<div class="a" style="left:1825px;top:871px;width:13px;height:13px;background:#195fc5;border-radius:3px"></div>
<svg style="left:1825px;top:871px" width="13" height="13" viewBox="0 0 13 13"><path d="M3.200 6.800L5.400 9L9.800 4.400" fill="none" stroke="#fff" stroke-width="1.100"/></svg>
<div class="a" style="left:1753px;top:914px;width:157px;height:1px;background:#dde1ea"></div>
<div class="a" style="left:1822px;top:890px;width:1px;height:25px;background:#dde1ea"></div>
<div class="t" style="left:1757px;top:895px;font-size:13px;line-height:16px;height:16px;color:#222">灰阶</div>
<div class="a" style="left:1825px;top:896px;width:13px;height:13px;background:#195fc5;border-radius:3px"></div>
<svg style="left:1825px;top:896px" width="13" height="13" viewBox="0 0 13 13"><path d="M3.200 6.800L5.400 9L9.800 4.400" fill="none" stroke="#fff" stroke-width="1.100"/></svg>
<div class="t" style="left:75.7px;top:974.800px;font-size:13.500px;line-height:16px;height:16px;color:#2a2a2a">Perspective</div>
<div class="t" style="left:163.4px;top:974.800px;font-size:13.500px;line-height:16px;height:16px;color:#2a2a2a">Top</div>
<div class="t" style="left:203.3px;top:974.800px;font-size:13.500px;line-height:16px;height:16px;color:#2a2a2a">Front</div>
<div class="t" style="left:252.3px;top:974.800px;font-size:13.500px;line-height:16px;height:16px;color:#2a2a2a">Right</div>
<svg style="left:130px;top:966px" width="200" height="30" viewBox="130 966 200 30"><path d="M139.800 970.500L160.200 991.500H186.500Q189.800 991.500 189.800 988.200V970.500" fill="none" stroke="#c7cde0" stroke-width="1"/><path d="M306.500 977.500h3v3h3v3h-3v3h-3v-3h-3v-3h3z" fill="#f4f4f4" stroke="#7a7a7a" stroke-width=".9"/></svg>
<div class="a" style="left:3px;top:1001px;width:1px;height:18px;background:#c3cadf"></div>
<div class="a" style="left:5px;top:1001px;width:1px;height:18px;background:#c3cadf"></div>
<div class="a" style="left:9px;top:1005px;width:13px;height:13px;background:#195fc5;border-radius:3px"></div>
<svg style="left:9px;top:1005px" width="13" height="13" viewBox="0 0 13 13"><path d="M3.200 6.800L5.400 9L9.800 4.400" fill="none" stroke="#fff" stroke-width="1.100"/></svg>
<div class="t" style="left:25.3px;top:1004px;font-size:13px;line-height:16px;height:16px;color:#1a1a1a">端点</div>
<div class="a" style="left:58px;top:1005px;width:13px;height:13px;background:#195fc5;border-radius:3px"></div>
<svg style="left:58px;top:1005px" width="13" height="13" viewBox="0 0 13 13"><path d="M3.200 6.800L5.400 9L9.800 4.400" fill="none" stroke="#fff" stroke-width="1.100"/></svg>
<div class="t" style="left:74.3px;top:1004px;font-size:13px;line-height:16px;height:16px;color:#1a1a1a">最近点</div>
<div class="a" style="left:120px;top:1005px;width:13px;height:13px;background:#f5f5f6;border:1px solid #5c5c5c;border-radius:3px"></div>
<div class="t" style="left:136.3px;top:1004px;font-size:13px;line-height:16px;height:16px;color:#1a1a1a">点</div>
<div class="a" style="left:156px;top:1005px;width:13px;height:13px;background:#f5f5f6;border:1px solid #5c5c5c;border-radius:3px"></div>
<div class="t" style="left:172.3px;top:1004px;font-size:13px;line-height:16px;height:16px;color:#1a1a1a">中点</div>
<div class="a" style="left:205px;top:1005px;width:13px;height:13px;background:#f5f5f6;border:1px solid #5c5c5c;border-radius:3px"></div>
<div class="t" style="left:221.3px;top:1004px;font-size:13px;line-height:16px;height:16px;color:#1a1a1a">中心点</div>
<div class="a" style="left:267px;top:1005px;width:13px;height:13px;background:#f5f5f6;border:1px solid #5c5c5c;border-radius:3px"></div>
<div class="t" style="left:283.3px;top:1004px;font-size:13px;line-height:16px;height:16px;color:#1a1a1a">交点</div>
<div class="a" style="left:316px;top:1005px;width:13px;height:13px;background:#f5f5f6;border:1px solid #5c5c5c;border-radius:3px"></div>
<div class="t" style="left:332.3px;top:1004px;font-size:13px;line-height:16px;height:16px;color:#1a1a1a">垂点</div>
<div class="a" style="left:365px;top:1005px;width:13px;height:13px;background:#f5f5f6;border:1px solid #5c5c5c;border-radius:3px"></div>
<div class="t" style="left:381.3px;top:1004px;font-size:13px;line-height:16px;height:16px;color:#1a1a1a">切点</div>
<div class="a" style="left:414px;top:1005px;width:13px;height:13px;background:#f5f5f6;border:1px solid #5c5c5c;border-radius:3px"></div>
<div class="t" style="left:430.3px;top:1004px;font-size:13px;line-height:16px;height:16px;color:#1a1a1a">四分点</div>
<div class="a" style="left:476px;top:1005px;width:13px;height:13px;background:#195fc5;border-radius:3px"></div>
<svg style="left:476px;top:1005px" width="13" height="13" viewBox="0 0 13 13"><path d="M3.200 6.800L5.400 9L9.800 4.400" fill="none" stroke="#fff" stroke-width="1.100"/></svg>
<div class="t" style="left:492.3px;top:1004px;font-size:13px;line-height:16px;height:16px;color:#1a1a1a">节点</div>
<div class="a" style="left:525px;top:1005px;width:13px;height:13px;background:#f5f5f6;border:1px solid #5c5c5c;border-radius:3px"></div>
<div class="t" style="left:541.3px;top:1004px;font-size:13px;line-height:16px;height:16px;color:#1a1a1a">顶点</div>
<div class="a" style="left:575.0px;top:1006px;width:11px;height:11px;background:#fdfdfd;border:1px solid #d6d6d6;border-radius:50%"></div>
<div class="t" style="left:590.3px;top:1004px;font-size:13px;line-height:16px;height:16px;color:#1a1a1a">投影</div>
<div class="a" style="left:636.9px;top:1006px;width:11px;height:11px;background:#fdfdfd;border:1px solid #d6d6d6;border-radius:50%"></div>
<div class="t" style="left:652.1999999999999px;top:1004px;font-size:13px;line-height:16px;height:16px;color:#1a1a1a">停用</div>
<div class="a" style="left:0;top:1020px;width:1920px;height:1px;background:#c3cbe0"></div>
<div class="a" style="left:0;top:1021px;width:60px;height:19px;background:#d2d9ef"></div>
<div class="a" style="left:743px;top:1021px;width:62px;height:19px;background:#d5dcf0"></div>
<div class="a" style="left:868px;top:1021px;width:48px;height:19px;background:#d5dcf0"></div>
<div class="a" style="left:60px;top:1021px;width:1px;height:19px;background:#c3cbe0"></div>
<div class="a" style="left:148px;top:1021px;width:1px;height:19px;background:#c3cbe0"></div>
<div class="a" style="left:236px;top:1021px;width:1px;height:19px;background:#c3cbe0"></div>
<div class="a" style="left:324px;top:1021px;width:1px;height:19px;background:#c3cbe0"></div>
<div class="a" style="left:412px;top:1021px;width:1px;height:19px;background:#c3cbe0"></div>
<div class="a" style="left:580px;top:1021px;width:1px;height:19px;background:#c3cbe0"></div>
<div class="a" style="left:642px;top:1021px;width:1px;height:19px;background:#c3cbe0"></div>
<div class="a" style="left:680px;top:1021px;width:1px;height:19px;background:#c3cbe0"></div>
<div class="a" style="left:742px;top:1021px;width:1px;height:19px;background:#c3cbe0"></div>
<div class="a" style="left:805px;top:1021px;width:1px;height:19px;background:#c3cbe0"></div>
<div class="a" style="left:867px;top:1021px;width:1px;height:19px;background:#c3cbe0"></div>
<div class="a" style="left:916px;top:1021px;width:1px;height:19px;background:#c3cbe0"></div>
<div class="a" style="left:1002px;top:1021px;width:1px;height:19px;background:#c3cbe0"></div>
<div class="a" style="left:1052px;top:1021px;width:1px;height:19px;background:#c3cbe0"></div>
<div class="a" style="left:1912px;top:1021px;width:1px;height:19px;background:#c3cbe0"></div>
<div class="t" style="left:17.5px;top:1024px;font-size:13px;line-height:16px;height:16px;color:#1a1a1a;font-weight:bold;">世界</div>
<div class="t" style="left:74.700px;top:1024px;font-size:14px;letter-spacing:.15px;line-height:16px;height:16px;color:#1a1a1a">x -21.330</div>
<div class="t" style="left:164.500px;top:1024px;font-size:14px;letter-spacing:.15px;line-height:16px;height:16px;color:#1a1a1a">y 21.164</div>
<div class="t" style="left:258px;top:1024px;font-size:14px;letter-spacing:.15px;line-height:16px;height:16px;color:#1a1a1a">z 0.000</div>
<div class="t" style="left:332.5px;top:1024px;font-size:13px;line-height:16px;height:16px;color:#1a1a1a;"><span style="font-size:14px">10.000 </span>毫米</div>
<div class="a" style="left:416.500px;top:1024.500px;width:13.500px;height:13px;background:#000"></div>
<div class="t" style="left:432px;top:1024px;font-size:13px;line-height:16px;height:16px;color:#1a1a1a;">默认值</div>
<div class="t" style="left:586.5px;top:1024px;font-size:13px;line-height:16px;height:16px;color:#1a1a1a;">锁定格点</div>
<div class="t" style="left:649px;top:1024px;font-size:13px;line-height:16px;height:16px;color:#1a1a1a;">正交</div>
<div class="t" style="left:686px;top:1024px;font-size:13px;line-height:16px;height:16px;color:#1a1a1a;">平面模式</div>
<div class="t" style="left:748px;top:1024px;font-size:13px;line-height:16px;height:16px;color:#1a1a1a;font-weight:bold;">物件锁点</div>
<div class="t" style="left:810px;top:1024px;font-size:13px;line-height:16px;height:16px;color:#1a1a1a;">智慧轨迹</div>
<div class="t" style="left:872.5px;top:1024px;font-size:13px;line-height:16px;height:16px;color:#1a1a1a;font-weight:bold;">操作轴</div>
<div class="t" style="left:921px;top:1024px;font-size:13px;line-height:16px;height:16px;color:#1a1a1a;">记录建构历史</div>
<div class="t" style="left:1008px;top:1024px;font-size:13px;line-height:16px;height:16px;color:#1a1a1a;">过滤器</div>
<div class="t" style="left:1054px;top:1024px;font-size:13px;line-height:16px;height:16px;color:#1a1a1a;">距离上次保存的时间 <span style="font-size:13.5px">(</span>分钟<span style="font-size:13.5px">): 5</span></div>
</body></html>
